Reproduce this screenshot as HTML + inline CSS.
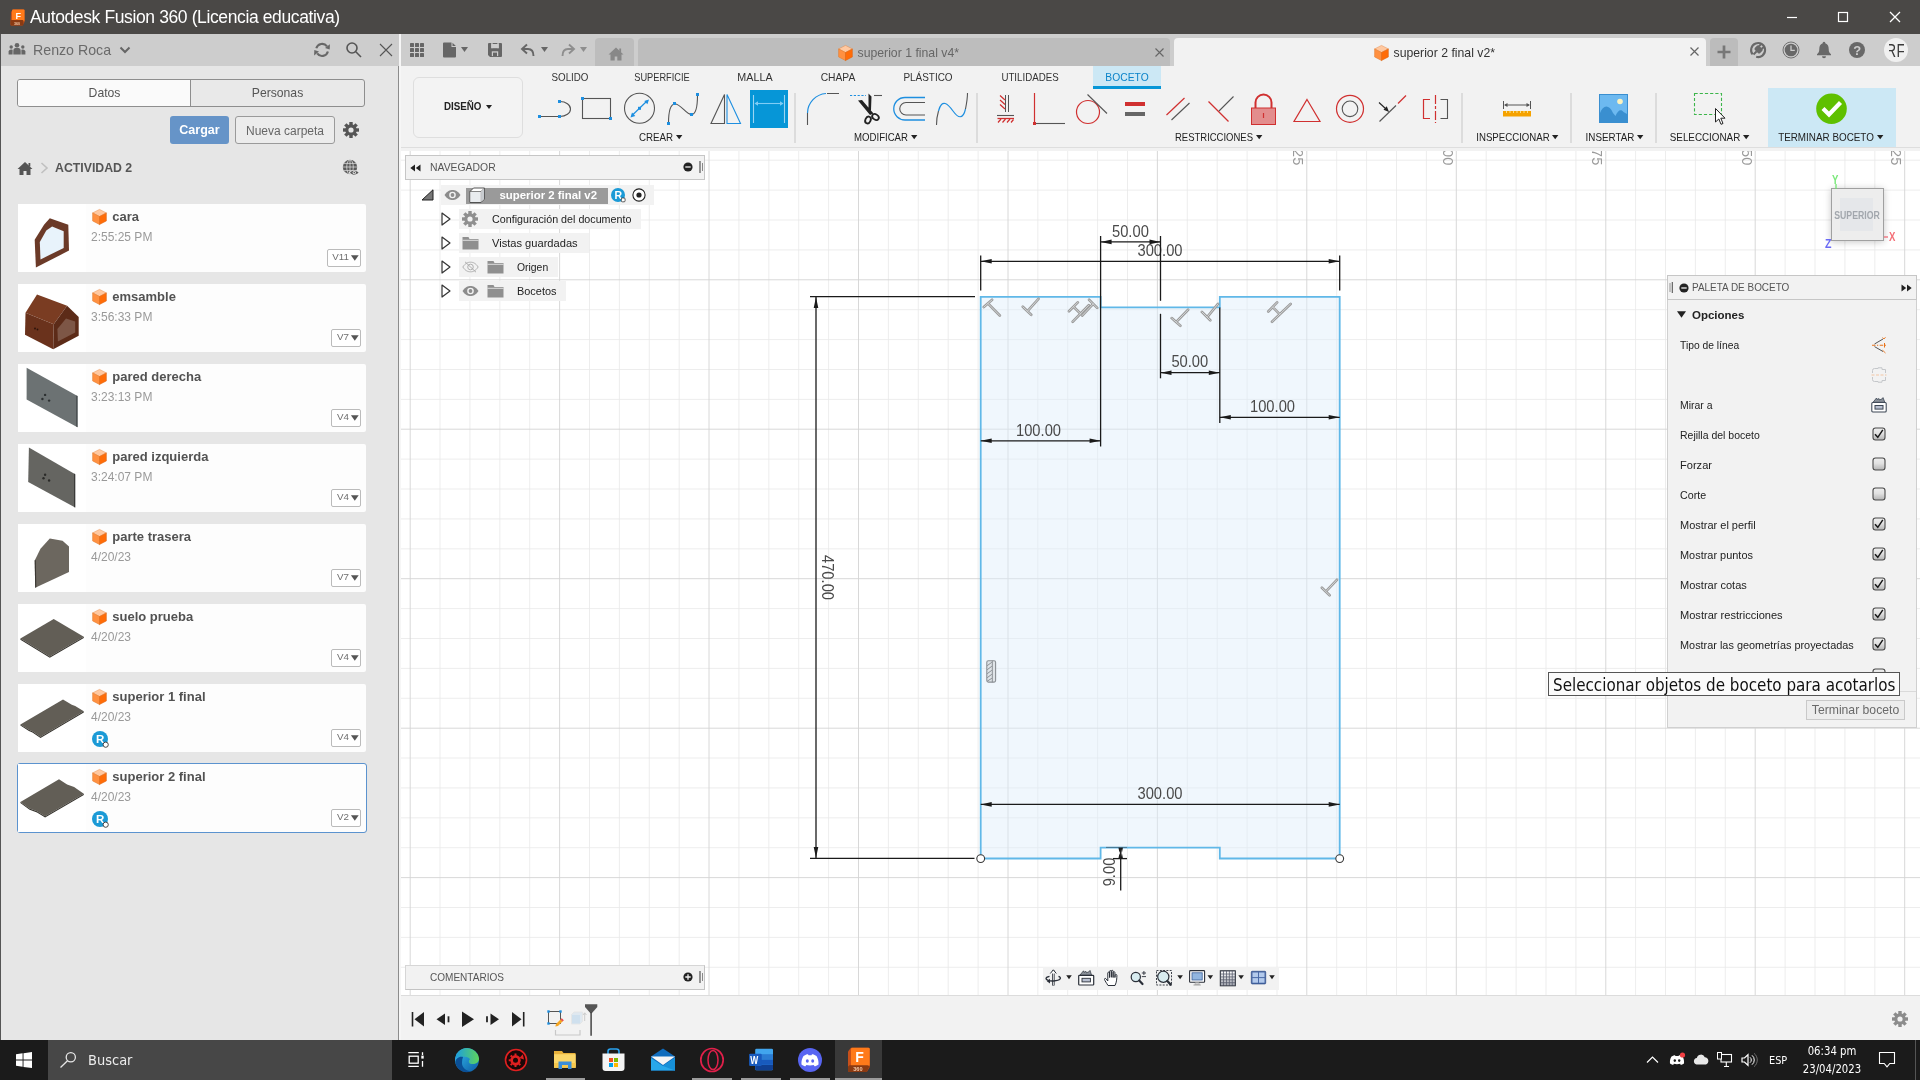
<!DOCTYPE html>
<html lang="es">
<head>
<meta charset="utf-8">
<title>Autodesk Fusion 360 (Licencia educativa)</title>
<style>
*{box-sizing:border-box;margin:0;padding:0}
html,body{width:1920px;height:1080px;overflow:hidden;background:#f2f2f2}
body{font-family:"Liberation Sans",sans-serif;font-size:12px;color:#333;position:relative}
.abs{position:absolute}
svg{position:absolute;overflow:visible}
.t{position:absolute;white-space:nowrap;line-height:1}
/* title bar */
#titlebar{position:absolute;left:0;top:0;width:1920px;height:34px;background:#4a4846}
#titlebar .ttl{left:30px;top:9px;font-size:17.5px;color:#fff;letter-spacing:-0.38px}
/* left panel */
#left{position:absolute;left:0;top:34px;width:399px;height:1006px;background:#e6e6e6;border-left:1px solid #555}
#lhead{position:absolute;left:0;top:0;width:398px;height:32px;background:#cdcdcd}
#ledge{position:absolute;left:397px;top:32px;width:1px;height:974px;background:#8c8c8c}
#gap{position:absolute;left:399px;top:34px;width:2px;height:1006px;background:#f6f6f6}
.card{position:absolute;left:18px;width:348px;height:68px;background:#fdfdfd;border-radius:2px}
.card .th{position:absolute;left:0;top:0;width:68px;height:68px;background:#fff}
.card .nm{left:94.3px;top:6px;font-size:13px;font-weight:bold;color:#525252}
.card .tm{left:73px;top:27px;font-size:12px;color:#999}
.card .vb{position:absolute;right:5px;top:45px;height:18px;border:1px solid #bbb;border-radius:2px;background:#fff;font-size:9.8px;color:#6e6e6e;padding:2.1px 11px 0 4.6px;line-height:1}
.card .vb:after{content:"";position:absolute;right:1.3px;top:5.3px;width:7.8px;height:5.4px;background:#555;clip-path:polygon(0 0,100% 0,50% 100%)}
.card.sel{outline:1px solid #5b93cf;border-radius:2px}
/* top bar */
#topbar{position:absolute;left:401px;top:34px;width:1519px;height:32px;background:#cdcdcd}
#toolbar{position:absolute;left:401px;top:66px;width:1519px;height:85px;background:#f2f2f2}
.tab{font-size:11.1px;color:#333;top:72.4px;transform:scaleX(.875)}
.glabel{font-size:11.1px;color:#222;top:132.4px;transform:scaleX(.885)}

.sep{position:absolute;top:93px;width:2px;height:50px;background:#dcdcdc}
/* canvas */
#canvas{position:absolute;left:401px;top:151px;width:1519px;height:844px;background:#fff;overflow:hidden}
#timeline{position:absolute;left:401px;top:995px;width:1519px;height:45px;background:#f2f2f2;border-top:1px solid #dcdcdc}
#taskbar{position:absolute;left:0;top:1040px;width:1920px;height:40px;background:#1b1b1b}
.dim{font-size:17px;fill:#4a4a4a;font-family:"Liberation Sans",sans-serif}
.prow{font-size:11px;color:#222}
</style>
</head>
<body>
<div id="root" style="position:absolute;left:0;top:0;width:1920px;height:1080px;will-change:transform">
<div id="titlebar">
  <svg style="left:10px;top:9px" width="15" height="17" viewBox="0 0 15 17">
    <path d="M1 3 L3 0.5 H13.5 A1 1 0 0 1 14.5 1.5 V13 L12.5 16.5 H1.5 A1 1 0 0 1 0.5 15.5 Z" fill="#c8501a"/>
    <rect x="2" y="0.5" width="12.5" height="12" rx="1" fill="#ff7a1a"/>
    <rect x="0.5" y="11" width="13" height="5.5" rx="1" fill="#8a3a12"/>
    <text x="5.5" y="9.5" font-size="9" font-weight="bold" fill="#fff" font-family="Liberation Sans,sans-serif">F</text>
    <text x="4" y="15.6" font-size="3.6" font-weight="bold" fill="#f5c9a8" font-family="Liberation Sans,sans-serif">360</text>
  </svg>
  <div class="t ttl">Autodesk Fusion 360 (Licencia educativa)</div>
  <svg style="left:1780px;top:0" width="140" height="34" viewBox="0 0 140 34">
    <path d="M7 17.5 H17" stroke="#fff" stroke-width="1.2" fill="none"/>
    <rect x="58.5" y="12.5" width="9" height="9" stroke="#fff" stroke-width="1.2" fill="none"/>
    <path d="M110 12 L120 22 M120 12 L110 22" stroke="#fff" stroke-width="1.3" fill="none"/>
  </svg>
</div>
<div id="left"><div id="lhead"></div><div id="ledge"></div>
</div><div id="gap"></div>
<svg style="left:8px;top:42px" width="18" height="14" viewBox="0 0 18 14" fill="#666">
<circle cx="9" cy="3.2" r="2.3"/><path d="M5.3 12.5 V9 A3.7 3.2 0 0 1 12.7 9 V12.5 Z"/>
<circle cx="3.2" cy="5" r="1.7"/><path d="M0.6 12.5 V9.6 A2.6 2.4 0 0 1 4.6 7.8 V12.5 Z"/>
<circle cx="14.8" cy="5" r="1.7"/><path d="M17.4 12.5 V9.6 A2.6 2.4 0 0 0 13.4 7.8 V12.5 Z"/></svg>
<div class="t" style="left:33px;top:43px;font-size:14.2px;color:#6a6a6a">Renzo Roca</div>
<svg style="left:119px;top:46px" width="12" height="8" viewBox="0 0 12 8"><path d="M1.5 1.5 L6 6 L10.5 1.5" stroke="#666" stroke-width="2" fill="none"/></svg>
<svg style="left:313px;top:41px" width="18" height="18" viewBox="0 0 18 18" fill="none" stroke="#686868" stroke-width="2.1">
<path d="M3.3 7.3 A6 6 0 0 1 14 5.4"/><path d="M14.9 10.5 A6 6 0 0 1 4.2 12.4"/><path d="M16.9 3.2 L16.7 8.6 L12 7.1 Z" fill="#686868" stroke="none"/><path d="M1.1 14.4 L1.3 9.1 L6 10.6 Z" fill="#686868" stroke="none"/></svg>
<svg style="left:345px;top:41px" width="18" height="18" viewBox="0 0 18 18" fill="none" stroke="#555" stroke-width="1.6"><circle cx="7" cy="7" r="5"/><path d="M10.8 10.8 L16 16"/></svg>
<svg style="left:379px;top:43px" width="14" height="14" viewBox="0 0 14 14" fill="none" stroke="#555" stroke-width="1.1"><path d="M1 1 L13 13 M13 1 L1 13"/></svg>
<div class="abs" style="left:17px;top:79px;width:348px;height:28px;border:1px solid #8e8e8e;border-radius:3px;background:#e9e9e9;overflow:hidden"><div class="abs" style="left:0;top:0;width:173px;height:26px;background:#fafafa;border-right:1px solid #8e8e8e"></div></div>
<div class="t" style="left:18px;top:87px;width:173px;text-align:center;font-size:12.2px;color:#555">Datos</div>
<div class="t" style="left:191px;top:87px;width:173px;text-align:center;font-size:12.2px;color:#555">Personas</div>
<div class="abs" style="left:170px;top:116px;width:59px;height:28px;background:#6694c8;border-radius:3px"></div><div class="t" style="left:170px;top:124px;width:59px;text-align:center;font-size:12.5px;font-weight:bold;color:#fff">Cargar</div>
<div class="abs" style="left:235px;top:116px;width:100px;height:28px;border:1px solid #9a9a9a;border-radius:3px;background:#ececec"></div><div class="t" style="left:235px;top:125px;width:100px;text-align:center;font-size:12px;color:#666">Nueva carpeta</div>
<svg style="left:343px;top:122px" width="16" height="16" viewBox="-8 -8 16 16" fill="#555"><rect x="-1.7" y="-8" width="3.4" height="4" transform="rotate(0)"/><rect x="-1.7" y="-8" width="3.4" height="4" transform="rotate(45)"/><rect x="-1.7" y="-8" width="3.4" height="4" transform="rotate(90)"/><rect x="-1.7" y="-8" width="3.4" height="4" transform="rotate(135)"/><rect x="-1.7" y="-8" width="3.4" height="4" transform="rotate(180)"/><rect x="-1.7" y="-8" width="3.4" height="4" transform="rotate(225)"/><rect x="-1.7" y="-8" width="3.4" height="4" transform="rotate(270)"/><rect x="-1.7" y="-8" width="3.4" height="4" transform="rotate(315)"/><path fill-rule="evenodd" d="M0 -5.8 A5.8 5.8 0 1 0 0 5.8 A5.8 5.8 0 1 0 0 -5.8 Z M0 -2.6 A2.6 2.6 0 1 1 0 2.6 A2.6 2.6 0 1 1 0 -2.6 Z"/></svg>
<svg style="left:17px;top:161px" width="16" height="15" viewBox="0 0 16 15"><path d="M8 1 L15.5 8 H13.5 V14 H9.5 V10 H6.5 V14 H2.5 V8 H0.5 Z" fill="#555"/><rect x="11.5" y="2" width="1.8" height="3.5" fill="#555"/></svg>
<svg style="left:40px;top:162px" width="9" height="12" viewBox="0 0 9 12"><path d="M1.5 1 L7 6 L1.5 11" stroke="#c0c0c0" stroke-width="1.6" fill="none"/></svg>
<div class="t" style="left:55px;top:162px;font-size:12.3px;font-weight:bold;color:#555">ACTIVIDAD 2</div>
<svg style="left:342px;top:159px" width="18" height="18" viewBox="0 0 18 18" fill="none"><circle cx="8" cy="8" r="7.2" fill="#5a5a5a"/><ellipse cx="8" cy="8" rx="3.3" ry="7.2" stroke="#e6e6e6" stroke-width="0.7"/><path d="M0.8 8 H15.2 M1.8 4.4 H14.2 M1.8 11.6 H14.2 M8 0.8 V15.2" stroke="#e6e6e6" stroke-width="0.7"/><path d="M6.8 13.6 C9 10 14 10 17.6 13.6 C14 17.4 9 17.4 6.8 13.6 Z" fill="#e6e6e6"/><path d="M8 13.6 C9.8 11 14 11 16.6 13.6 C14 16.4 9.8 16.4 8 13.6 Z" fill="#5a5a5a"/><circle cx="12.3" cy="13.6" r="1.7" fill="#e6e6e6"/><circle cx="12.3" cy="13.6" r="0.8" fill="#5a5a5a"/></svg>
<div class="card" style="top:204px"><div class="th"><svg style="left:0;top:0" width="68" height="68" viewBox="0 0 68 68"><path d="M31.8 14.2 L50.3 20.7 L51 46.6 L17.9 63.5 L16.7 35.8 L26 20.7 Z" fill="#6b3a28"/><path d="M34.1 22.6 L45.7 27.2 L45.7 43.9 L22.5 55.4 L21.8 38.1 L28.3 26.5 Z" fill="#e8f3fb"/></svg></div><svg style="left:74px;top:5px" width="15" height="16.0" viewBox="0 0 15 16"><path d="M7.5 0.4 L14.4 3.9 L7.5 7.5 L0.6 3.9 Z" fill="#ffc8a0" stroke="#e88a48" stroke-width="0.5"/><path d="M0.6 3.9 L7.5 7.5 V15.6 L0.6 11.9 Z" fill="#ff9040" stroke="#e07828" stroke-width="0.5"/><path d="M14.4 3.9 L7.5 7.5 V15.6 L14.4 11.9 Z" fill="#ff6c08" stroke="#d86414" stroke-width="0.5"/></svg><div class="t nm">cara</div><div class="t tm">2:55:25 PM</div><div class="vb">V11</div></div>
<div class="card" style="top:284px"><div class="th"><svg style="left:0;top:0" width="68" height="68" viewBox="0 0 68 68"><path d="M19 10.6 L49.1 21.7 L35.7 40.3 L7.5 28.7 Z" fill="#7a3c22"/><path d="M7.5 28.7 L35.7 40.3 L35.2 65.3 L7 50.7 Z" fill="#6a321c"/><path d="M49.1 21.7 L60.7 32.9 L60.7 51.8 L35.2 65.3 L35.7 40.3 Z" fill="#5c2b18"/><path d="M48 34.5 L57.2 37.5 L57.2 48.4 L39.9 57.6 L39.4 44.9 Z" fill="#7d5646"/><circle cx="17" cy="44.5" r="0.9" fill="#2a120a"/><circle cx="19.5" cy="45.5" r="0.9" fill="#2a120a"/></svg></div><svg style="left:74px;top:5px" width="15" height="16.0" viewBox="0 0 15 16"><path d="M7.5 0.4 L14.4 3.9 L7.5 7.5 L0.6 3.9 Z" fill="#ffc8a0" stroke="#e88a48" stroke-width="0.5"/><path d="M0.6 3.9 L7.5 7.5 V15.6 L0.6 11.9 Z" fill="#ff9040" stroke="#e07828" stroke-width="0.5"/><path d="M14.4 3.9 L7.5 7.5 V15.6 L14.4 11.9 Z" fill="#ff6c08" stroke="#d86414" stroke-width="0.5"/></svg><div class="t nm">emsamble</div><div class="t tm">3:56:33 PM</div><div class="vb">V7</div></div>
<div class="card" style="top:364px"><div class="th"><svg style="left:0;top:0" width="68" height="68" viewBox="0 0 68 68"><path d="M8.6 3.8 L59.5 32 L59.5 63.3 L8.6 35.5 Z" fill="#6c7273"/><path d="M58.3 31.4 L59.5 32 L59.5 63.3 L58.3 62.6 Z" fill="#3f4446"/><circle cx="27.1" cy="30.9" r="1.2" fill="#2c3031"/><circle cx="24.4" cy="35" r="1.2" fill="#2c3031"/><circle cx="31.1" cy="36.6" r="1.2" fill="#2c3031"/></svg></div><svg style="left:74px;top:5px" width="15" height="16.0" viewBox="0 0 15 16"><path d="M7.5 0.4 L14.4 3.9 L7.5 7.5 L0.6 3.9 Z" fill="#ffc8a0" stroke="#e88a48" stroke-width="0.5"/><path d="M0.6 3.9 L7.5 7.5 V15.6 L0.6 11.9 Z" fill="#ff9040" stroke="#e07828" stroke-width="0.5"/><path d="M14.4 3.9 L7.5 7.5 V15.6 L14.4 11.9 Z" fill="#ff6c08" stroke="#d86414" stroke-width="0.5"/></svg><div class="t nm">pared derecha</div><div class="t tm">3:23:13 PM</div><div class="vb">V4</div></div>
<div class="card" style="top:444px"><div class="th"><svg style="left:0;top:0" width="68" height="68" viewBox="0 0 68 68"><path d="M10.9 3.4 L57.2 30.3 L57.2 63.6 L10.2 38.1 Z" fill="#656561"/><path d="M56 29.6 L57.2 30.3 L57.2 63.6 L56 63 Z" fill="#3a3a38"/><circle cx="27.1" cy="30.7" r="1.2" fill="#2a2a28"/><circle cx="25.5" cy="34.2" r="1.2" fill="#2a2a28"/><circle cx="31.1" cy="36.5" r="1.2" fill="#2a2a28"/></svg></div><svg style="left:74px;top:5px" width="15" height="16.0" viewBox="0 0 15 16"><path d="M7.5 0.4 L14.4 3.9 L7.5 7.5 L0.6 3.9 Z" fill="#ffc8a0" stroke="#e88a48" stroke-width="0.5"/><path d="M0.6 3.9 L7.5 7.5 V15.6 L0.6 11.9 Z" fill="#ff9040" stroke="#e07828" stroke-width="0.5"/><path d="M14.4 3.9 L7.5 7.5 V15.6 L14.4 11.9 Z" fill="#ff6c08" stroke="#d86414" stroke-width="0.5"/></svg><div class="t nm">pared izquierda</div><div class="t tm">3:24:07 PM</div><div class="vb">V4</div></div>
<div class="card" style="top:524px"><div class="th"><svg style="left:0;top:0" width="68" height="68" viewBox="0 0 68 68"><path d="M31.8 14.4 L44.5 16.7 L51 22.5 L51 47.9 L17.2 63.7 L16.7 36.4 L22.5 24.8 Z" fill="#6c675f"/><path d="M16.7 36.4 L17.8 36 L18.3 63.2 L17.2 63.7 Z" fill="#3a3732"/></svg></div><svg style="left:74px;top:5px" width="15" height="16.0" viewBox="0 0 15 16"><path d="M7.5 0.4 L14.4 3.9 L7.5 7.5 L0.6 3.9 Z" fill="#ffc8a0" stroke="#e88a48" stroke-width="0.5"/><path d="M0.6 3.9 L7.5 7.5 V15.6 L0.6 11.9 Z" fill="#ff9040" stroke="#e07828" stroke-width="0.5"/><path d="M14.4 3.9 L7.5 7.5 V15.6 L14.4 11.9 Z" fill="#ff6c08" stroke="#d86414" stroke-width="0.5"/></svg><div class="t nm">parte trasera</div><div class="t tm">4/20/23</div><div class="vb">V7</div></div>
<div class="card" style="top:604px"><div class="th"><svg style="left:0;top:0" width="68" height="68" viewBox="0 0 68 68"><path d="M35.7 14.9 L65.8 32.8 L31.8 52.4 L2.4 34.6 Z" fill="#625e56"/><path d="M2.4 34.6 L31.8 52.4 L65.8 32.8 L65.8 34 L31.8 53.8 L2.4 35.8 Z" fill="#38352f"/></svg></div><svg style="left:74px;top:5px" width="15" height="16.0" viewBox="0 0 15 16"><path d="M7.5 0.4 L14.4 3.9 L7.5 7.5 L0.6 3.9 Z" fill="#ffc8a0" stroke="#e88a48" stroke-width="0.5"/><path d="M0.6 3.9 L7.5 7.5 V15.6 L0.6 11.9 Z" fill="#ff9040" stroke="#e07828" stroke-width="0.5"/><path d="M14.4 3.9 L7.5 7.5 V15.6 L14.4 11.9 Z" fill="#ff6c08" stroke="#d86414" stroke-width="0.5"/></svg><div class="t nm">suelo prueba</div><div class="t tm">4/20/23</div><div class="vb">V4</div></div>
<div class="card" style="top:684px"><div class="th"><svg style="left:0;top:0" width="68" height="68" viewBox="0 0 68 68"><path d="M45 15.4 L53.8 20.7 L57.2 21.9 L65.8 27.2 L22.5 52.7 L14.4 47.3 L10.9 45.7 L2.4 40.4 Z" fill="#625e56"/><path d="M2.4 40.4 L10.9 45.7 L14.4 47.3 L22.5 52.7 L65.8 27.2 L65.8 28.4 L22.5 54 L14.4 48.6 L10.9 47 L2.4 41.6 Z" fill="#38352f"/></svg></div><svg style="left:74px;top:5px" width="15" height="16.0" viewBox="0 0 15 16"><path d="M7.5 0.4 L14.4 3.9 L7.5 7.5 L0.6 3.9 Z" fill="#ffc8a0" stroke="#e88a48" stroke-width="0.5"/><path d="M0.6 3.9 L7.5 7.5 V15.6 L0.6 11.9 Z" fill="#ff9040" stroke="#e07828" stroke-width="0.5"/><path d="M14.4 3.9 L7.5 7.5 V15.6 L14.4 11.9 Z" fill="#ff6c08" stroke="#d86414" stroke-width="0.5"/></svg><div class="t nm">superior 1 final</div><div class="t tm">4/20/23</div><svg style="left:74px;top:46.6px" width="18" height="18" viewBox="0 0 18 18"><circle cx="8" cy="8" r="8" fill="#1b9ad6"/><text x="4" y="12.3" font-size="11.5" font-weight="bold" fill="#fff" font-family="Liberation Sans,sans-serif">R</text><circle cx="13.7" cy="13.7" r="2.6" fill="#fff" stroke="#333" stroke-width="0.9"/></svg><div class="vb">V4</div></div>
<div class="card sel" style="top:764px"><div class="th"><svg style="left:0;top:0" width="68" height="68" viewBox="0 0 68 68"><path d="M41 15.3 L49.1 20.6 L56.1 22.9 L65.8 29.8 L27.1 52.3 L19 47.2 L11.6 44.4 L2.4 37.9 Z" fill="#625e56"/><path d="M2.4 37.9 L11.6 44.4 L19 47.2 L27.1 52.3 L65.8 29.8 L65.8 31 L27.1 53.6 L19 48.5 L11.6 45.7 L2.4 39.1 Z" fill="#38352f"/></svg></div><svg style="left:74px;top:5px" width="15" height="16.0" viewBox="0 0 15 16"><path d="M7.5 0.4 L14.4 3.9 L7.5 7.5 L0.6 3.9 Z" fill="#ffc8a0" stroke="#e88a48" stroke-width="0.5"/><path d="M0.6 3.9 L7.5 7.5 V15.6 L0.6 11.9 Z" fill="#ff9040" stroke="#e07828" stroke-width="0.5"/><path d="M14.4 3.9 L7.5 7.5 V15.6 L14.4 11.9 Z" fill="#ff6c08" stroke="#d86414" stroke-width="0.5"/></svg><div class="t nm">superior 2 final</div><div class="t tm">4/20/23</div><svg style="left:74px;top:46.6px" width="18" height="18" viewBox="0 0 18 18"><circle cx="8" cy="8" r="8" fill="#1b9ad6"/><text x="4" y="12.3" font-size="11.5" font-weight="bold" fill="#fff" font-family="Liberation Sans,sans-serif">R</text><circle cx="13.7" cy="13.7" r="2.6" fill="#fff" stroke="#333" stroke-width="0.9"/></svg><div class="vb">V2</div></div><div id="topbar"></div><div id="toolbar"></div>
<svg style="left:410px;top:43px" width="14" height="14" viewBox="0 0 14 14" fill="#666"><rect x="0" y="0" width="4" height="4" rx="0.6"/><rect x="5" y="0" width="4" height="4" rx="0.6"/><rect x="10" y="0" width="4" height="4" rx="0.6"/><rect x="0" y="5" width="4" height="4" rx="0.6"/><rect x="5" y="5" width="4" height="4" rx="0.6"/><rect x="10" y="5" width="4" height="4" rx="0.6"/><rect x="0" y="10" width="4" height="4" rx="0.6"/><rect x="5" y="10" width="4" height="4" rx="0.6"/><rect x="10" y="10" width="4" height="4" rx="0.6"/></svg>
<svg style="left:443px;top:42px" width="14" height="16" viewBox="0 0 14 16"><path d="M1 0.5 H8.5 V5 H13 V14.5 A1 1 0 0 1 12 15.5 H1 A1 1 0 0 1 0 14.5 V1.5 A1 1 0 0 1 1 0.5 Z" fill="#666"/><path d="M9.5 0.8 L12.8 4 H9.5 Z" fill="#666"/></svg>
<svg style="left:461px;top:47px" width="7" height="5" viewBox="0 0 7 5"><path d="M0 0 H7 L3.5 5 Z" fill="#666"/></svg>
<svg style="left:488px;top:43px" width="14" height="14" viewBox="0 0 14 14"><path d="M1 0 H13 A1 1 0 0 1 14 1 V13 A1 1 0 0 1 13 14 H2 L0 12 V1 A1 1 0 0 1 1 0 Z" fill="#666"/><rect x="3.3" y="1" width="7.4" height="4.2" fill="#cdcdcd"/><rect x="3.8" y="8.3" width="6.4" height="4.8" fill="#cdcdcd"/><rect x="5" y="9.6" width="4" height="3.6" fill="#666"/><rect x="3.3" y="0" width="1.3" height="5.2" fill="#cdcdcd"/><rect x="9.4" y="0" width="1.3" height="5.2" fill="#cdcdcd"/></svg>
<svg style="left:520px;top:43px" width="16" height="14" viewBox="0 0 16 14" fill="none" stroke="#666" stroke-width="1.9"><path d="M7 1.5 L2 6 L7 10.5"/><path d="M2.5 6 H8 C12 6 13.5 9 13.5 13"/></svg>
<svg style="left:541px;top:47px" width="7" height="5" viewBox="0 0 7 5"><path d="M0 0 H7 L3.5 5 Z" fill="#666"/></svg>
<svg style="left:560px;top:43px" width="16" height="14" viewBox="0 0 16 14" fill="none" stroke="#8e8e8e" stroke-width="1.9"><path d="M9 1.5 L14 6 L9 10.5"/><path d="M13.5 6 H8 C4 6 2.5 9 2.5 13"/></svg>
<svg style="left:580px;top:47px" width="7" height="5" viewBox="0 0 7 5"><path d="M0 0 H7 L3.5 5 Z" fill="#8e8e8e"/></svg>
<div class="abs" style="left:595px;top:38px;width:39px;height:28px;background:#bdbdbd;border-radius:4px 4px 0 0"></div>
<svg style="left:608px;top:47px" width="16" height="14" viewBox="0 0 16 14"><path d="M8 0.5 L15.5 7.5 H13.5 V13.5 H9.3 V9.5 H6.7 V13.5 H2.5 V7.5 H0.5 Z" fill="#888"/><rect x="11.3" y="1.5" width="1.8" height="3.5" fill="#888"/></svg>
<div class="abs" style="left:638px;top:38px;width:532px;height:28px;background:#bdbdbd;border-radius:4px 4px 0 0"></div>
<svg style="left:838px;top:45px" width="15" height="16.0" viewBox="0 0 15 16"><path d="M7.5 0.4 L14.4 3.9 L7.5 7.5 L0.6 3.9 Z" fill="#ffc8a0" stroke="#e88a48" stroke-width="0.5"/><path d="M0.6 3.9 L7.5 7.5 V15.6 L0.6 11.9 Z" fill="#ff9040" stroke="#e07828" stroke-width="0.5"/><path d="M14.4 3.9 L7.5 7.5 V15.6 L14.4 11.9 Z" fill="#ff6c08" stroke="#d86414" stroke-width="0.5"/></svg>
<div class="t" style="left:857.5px;top:47px;font-size:12.25px;color:#666">superior 1 final v4*</div>
<svg style="left:1154.5px;top:47.5px" width="9" height="9" viewBox="0 0 9 9"><path d="M0.5 0.5 L8.5 8.5 M8.5 0.5 L0.5 8.5" stroke="#666" stroke-width="1.1"/></svg>
<div class="abs" style="left:1174px;top:38px;width:532px;height:28px;background:#f2f2f2;border-radius:4px 4px 0 0"></div>
<svg style="left:1374px;top:45px" width="15" height="16.0" viewBox="0 0 15 16"><path d="M7.5 0.4 L14.4 3.9 L7.5 7.5 L0.6 3.9 Z" fill="#ffc8a0" stroke="#e88a48" stroke-width="0.5"/><path d="M0.6 3.9 L7.5 7.5 V15.6 L0.6 11.9 Z" fill="#ff9040" stroke="#e07828" stroke-width="0.5"/><path d="M14.4 3.9 L7.5 7.5 V15.6 L14.4 11.9 Z" fill="#ff6c08" stroke="#d86414" stroke-width="0.5"/></svg>
<div class="t" style="left:1393.5px;top:47px;font-size:12.25px;color:#333">superior 2 final v2*</div>
<svg style="left:1690px;top:47px" width="9" height="9" viewBox="0 0 9 9"><path d="M0.5 0.5 L8.5 8.5 M8.5 0.5 L0.5 8.5" stroke="#666" stroke-width="1.2"/></svg>
<div class="abs" style="left:1710px;top:38px;width:28px;height:28px;background:#bcbcbc;border-radius:4px 4px 0 0"></div>
<svg style="left:1717px;top:45px" width="14" height="14" viewBox="0 0 14 14"><path d="M7 0.5 V13.5 M0.5 7 H13.5" stroke="#777" stroke-width="2.7"/></svg>
<svg style="left:1749px;top:41px" width="18" height="18" viewBox="0 0 18 18"><path d="M3.6 13.4 A7 7 0 1 1 7.2 15.8" fill="none" stroke="#686868" stroke-width="2.1"/><g transform="rotate(45 9 9)" fill="#686868"><rect x="5.3" y="5.2" width="7.4" height="6" rx="1.6"/><rect x="6.1" y="1.8" width="2" height="4"/><rect x="9.9" y="1.8" width="2" height="4"/><rect x="8" y="10.8" width="2" height="4.6"/></g></svg>
<svg style="left:1782px;top:41px" width="18" height="18" viewBox="0 0 18 18"><circle cx="9" cy="9" r="8" fill="none" stroke="#686868" stroke-width="0.9"/><circle cx="9" cy="9" r="6.3" fill="#686868"/><path d="M9 4.5 V9.3 H12.8" stroke="#cdcdcd" stroke-width="1.3" fill="none"/></svg>
<svg style="left:1816px;top:41px" width="16" height="18" viewBox="0 0 16 18"><path d="M8 0.8 A1.3 1.3 0 0 1 9.3 2.3 C12 3.2 12.7 5.5 12.7 8 C12.7 11 13.5 12 15 13.3 V14.3 H1 V13.3 C2.5 12 3.3 11 3.3 8 C3.3 5.5 4 3.2 6.7 2.3 A1.3 1.3 0 0 1 8 0.8 Z" fill="#686868"/><path d="M6 15.3 H10 A2 2 0 0 1 6 15.3 Z" fill="#686868"/></svg>
<svg style="left:1848px;top:41px" width="18" height="18" viewBox="0 0 18 18"><circle cx="9" cy="9" r="8" fill="#686868"/><text x="5.2" y="13.6" font-size="13" font-weight="bold" fill="#cdcdcd" font-family="Liberation Sans,sans-serif">?</text></svg>
<div class="abs" style="left:1883.7px;top:37.6px;width:24.6px;height:24.6px;border-radius:50%;background:#f0f0f0"></div>
<div class="abs" style="left:1889px;top:38px;width:15.2px;height:24px;overflow:hidden"><div class="t" style="left:-2.7px;top:4.9px;font-size:17.5px;color:#3a3a3a;letter-spacing:0.6px;transform:scaleX(.8);transform-origin:0 0">RF</div></div><div class="abs" style="left:1768px;top:88px;width:128px;height:59px;background:#cce8f5"></div>
<div class="abs" style="left:413px;top:76.5px;width:110px;height:61px;border:1.5px solid #dedede;border-radius:6px;background:#f3f3f3"></div>
<div class="t" style="left:443.5px;top:101.3px;font-size:11.3px;font-weight:bold;color:#222;transform:scaleX(.865);transform-origin:0 0">DISEÑO</div>
<svg style="left:486px;top:105px" width="6" height="4" viewBox="0 0 6 4"><path d="M0 0 H6 L3.0 4 Z" fill="#222"/></svg>
<div class="t tab" style="left:519.5px;width:100px;text-align:center;transform:scaleX(0.882)">SOLIDO</div>
<div class="t tab" style="left:612px;width:100px;text-align:center;transform:scaleX(0.833)">SUPERFICIE</div>
<div class="t tab" style="left:705px;width:100px;text-align:center;transform:scaleX(0.97)">MALLA</div>
<div class="t tab" style="left:787.5px;width:100px;text-align:center;transform:scaleX(0.927)">CHAPA</div>
<div class="t tab" style="left:877.5px;width:100px;text-align:center;transform:scaleX(0.896)">PLÁSTICO</div>
<div class="t tab" style="left:980px;width:100px;text-align:center;transform:scaleX(0.876)">UTILIDADES</div>
<div class="abs" style="left:1092.5px;top:66px;width:68px;height:23.3px;background:#cce8f5;border-bottom:3px solid #0696d7"></div>
<div class="t tab" style="left:1076.5px;width:100px;text-align:center;color:#0a83c9;transform:scaleX(0.928)">BOCETO</div>
<div class="t glabel" style="left:555.5px;width:200px;text-align:center;transform:scaleX(0.88)">CREAR</div>
<svg style="left:675.6px;top:135.3px" width="6.4" height="4.2" viewBox="0 0 6.4 4.2"><path d="M0 0 H6.4 L3.2 4.2 Z" fill="#222"/></svg>
<div class="t glabel" style="left:781.0px;width:200px;text-align:center;transform:scaleX(0.867)">MODIFICAR</div>
<svg style="left:911.0px;top:135.3px" width="6.4" height="4.2" viewBox="0 0 6.4 4.2"><path d="M0 0 H6.4 L3.2 4.2 Z" fill="#222"/></svg>
<div class="t glabel" style="left:1114.0px;width:200px;text-align:center;transform:scaleX(0.855)">RESTRICCIONES</div>
<svg style="left:1256.0px;top:135.3px" width="6.4" height="4.2" viewBox="0 0 6.4 4.2"><path d="M0 0 H6.4 L3.2 4.2 Z" fill="#222"/></svg>
<div class="t glabel" style="left:1412.5px;width:200px;text-align:center;transform:scaleX(0.87)">INSPECCIONAR</div>
<svg style="left:1552.2px;top:135.3px" width="6.4" height="4.2" viewBox="0 0 6.4 4.2"><path d="M0 0 H6.4 L3.2 4.2 Z" fill="#222"/></svg>
<div class="t glabel" style="left:1510.0px;width:200px;text-align:center;transform:scaleX(0.885)">INSERTAR</div>
<svg style="left:1637.4px;top:135.3px" width="6.4" height="4.2" viewBox="0 0 6.4 4.2"><path d="M0 0 H6.4 L3.2 4.2 Z" fill="#222"/></svg>
<div class="t glabel" style="left:1604.5px;width:200px;text-align:center;transform:scaleX(0.886)">SELECCIONAR</div>
<svg style="left:1742.8px;top:135.3px" width="6.4" height="4.2" viewBox="0 0 6.4 4.2"><path d="M0 0 H6.4 L3.2 4.2 Z" fill="#222"/></svg>
<div class="t glabel" style="left:1726.0px;width:200px;text-align:center;transform:scaleX(0.889)">TERMINAR BOCETO</div>
<svg style="left:1876.9px;top:135.3px" width="6.4" height="4.2" viewBox="0 0 6.4 4.2"><path d="M0 0 H6.4 L3.2 4.2 Z" fill="#222"/></svg>
<div class="sep" style="left:794px"></div>
<div class="sep" style="left:976px"></div>
<div class="sep" style="left:1461px"></div>
<div class="sep" style="left:1570px"></div>
<div class="sep" style="left:1654.5px"></div>
<div class="abs" style="left:401px;top:147px;width:1519px;height:1px;background:#dedede"></div><svg style="left:401px;top:66px" width="1519" height="82" viewBox="401 66 1519 82" fill="none" stroke-linecap="butt">
<path d="M539 116.5 H559 M560 101.5 A10.5 7.5 0 0 1 560 116.5" stroke="#555" stroke-width="1.1"/><rect x="538.0" y="115.0" width="3" height="3" fill="#1e8fe0" stroke="none"/><rect x="558.0" y="115.0" width="3" height="3" fill="#1e8fe0" stroke="none"/><rect x="558.0" y="100.0" width="3" height="3" fill="#1e8fe0" stroke="none"/>
<rect x="582.5" y="98.5" width="28" height="20" stroke="#555" stroke-width="1.1"/><rect x="581.0" y="97.0" width="3" height="3" fill="#1e8fe0" stroke="none"/><rect x="609.0" y="117.0" width="3" height="3" fill="#1e8fe0" stroke="none"/>
<circle cx="639.5" cy="108.3" r="15" stroke="#555" stroke-width="1.1"/><path d="M632 115.5 L647 101" stroke="#1e8fe0" stroke-width="1.2"/><path d="M630.5 117.5 L632 112.5 L635.3 116 Z M649 99.5 L647.4 104.3 L644.2 101 Z" fill="#1e8fe0" stroke="none"/><rect x="638.0" y="106.8" width="3" height="3" fill="#1e8fe0" stroke="none"/>
<path d="M668.5 123.5 C668.5 110 671 104 675 104 C681 104 686 114.5 691.5 114.5 C696 114.5 697.5 106 697.5 95" stroke="#555" stroke-width="1.1"/><rect x="667.0" y="122.0" width="3" height="3" fill="#1e8fe0" stroke="none"/><rect x="673.0" y="102.0" width="3" height="3" fill="#1e8fe0" stroke="none"/><rect x="690.0" y="113.0" width="3" height="3" fill="#1e8fe0" stroke="none"/><rect x="696.0" y="93.0" width="3" height="3" fill="#1e8fe0" stroke="none"/>
<path d="M724.5 94.5 V123.5 H711 Z" stroke="#555" stroke-width="1.1"/><path d="M727 94.5 V123.5 H740.5 Z" stroke="#1e8fe0" stroke-width="1.1"/>
<rect x="750" y="90" width="38" height="38" fill="#0696d7" stroke="none"/><path d="M753.5 95 V123 M784.5 95 V123" stroke="#9ad5f2" stroke-width="1.1"/><path d="M755 103.5 H783" stroke="#7fcdf5" stroke-width="1.1"/><path d="M754.5 103.5 L758 101.3 V105.7 Z M783.5 103.5 L780 101.3 V105.7 Z" fill="#7fcdf5" stroke="none"/>
<path d="M807.5 113 A20 20 0 0 1 826 93.5" stroke="#1e8fe0" stroke-width="1.2"/><path d="M807.5 113 V125 M827 93.5 H839" stroke="#555" stroke-width="1.1"/>
<path d="M850 95.5 H866" stroke="#1e8fe0" stroke-width="1.1" stroke-dasharray="2.2 1.6"/><path d="M874 95.5 H882" stroke="#555" stroke-width="1.1"/>
<path d="M868.5 93.5 L871.5 96.5 L871 110 L868.5 112 Z M858 100.5 L862 100 L873.5 113.5 L870 115 Z" fill="#222" stroke="none"/><ellipse cx="868" cy="120" rx="2.6" ry="3.6" transform="rotate(25 868 120)" stroke="#222" stroke-width="1.8"/><ellipse cx="875.5" cy="117" rx="2.6" ry="3.6" transform="rotate(-55 875.5 117)" stroke="#222" stroke-width="1.8"/>
<path d="M925 97.5 H905 A11 11 0 0 0 905 120 H925" stroke="#1e8fe0" stroke-width="1.3"/><path d="M925 102.5 H906 A6 6 0 0 0 906 115 H925" stroke="#555" stroke-width="1.1"/>
<path d="M936.5 125 C936.5 120 937 116 938.5 111" stroke="#555" stroke-width="1.1"/><path d="M938.5 111 C942 98 948 104 953 111 C958 118 963 120 965.5 109" stroke="#1e8fe0" stroke-width="1.2"/><path d="M965.5 109 C966.5 104 967.5 98 967.5 93" stroke="#555" stroke-width="1.1"/>
<path d="M1005.5 95 V112 M1008.5 95 V112" stroke="#555" stroke-width="1"/><path d="M1000 95.5 L1005 100 M1000 100 L1005 104.5 M1000 104.5 L1005 109" stroke="#d03030" stroke-width="1.2"/><path d="M997 115.5 H1014" stroke="#555" stroke-width="1.1"/><path d="M997.5 118.5 H1014" stroke="#d03030" stroke-width="1.3"/><path d="M998 122.5 L1001 119 M1002.5 122.5 L1005.5 119 M1007 122.5 L1010 119 M1011 122.5 L1013.5 119.5" stroke="#d03030" stroke-width="1.2"/>
<path d="M1034.5 93 V122" stroke="#d03030" stroke-width="1.2"/><path d="M1036 123.5 H1065" stroke="#555" stroke-width="1.1"/><rect x="1033.0" y="122.0" width="3" height="3" fill="#d03030" stroke="none"/>
<circle cx="1088" cy="112" r="11.5" stroke="#d03030" stroke-width="1.2"/><path d="M1087.5 94.5 L1107 113.5" stroke="#555" stroke-width="1.1"/>
<rect x="1125" y="102" width="20" height="4" fill="#d03030" stroke="none"/><rect x="1125" y="112" width="20" height="4" fill="#666" stroke="none"/>
<path d="M1166.5 115 L1184.5 98" stroke="#d03030" stroke-width="1.2"/><path d="M1171.5 120 L1189.5 103" stroke="#555" stroke-width="1.1"/>
<path d="M1208.5 101.5 L1228.5 121.5" stroke="#d03030" stroke-width="1.2"/><path d="M1219 111 L1233.5 96.5" stroke="#555" stroke-width="1.1"/>
<path d="M1255.5 108 V102.5 A8 8 0 0 1 1271.5 102.5 V108" stroke="#d03030" stroke-width="2"/><rect x="1251.5" y="108" width="24" height="16.5" fill="#e38d8d" stroke="#d03030" stroke-width="1"/><path d="M1263.5 113 V118" stroke="#d03030" stroke-width="1.2"/>
<path d="M1307 99.5 L1320 121.5 H1294 Z" stroke="#d03030" stroke-width="1.2"/>
<circle cx="1350" cy="108.8" r="13.5" stroke="#d03030" stroke-width="1.2"/><circle cx="1350" cy="108.8" r="7.8" stroke="#555" stroke-width="1.1"/>
<path d="M1379.5 121.5 L1396 105.5" stroke="#555" stroke-width="1.1"/><path d="M1398 103.5 L1406 95.5" stroke="#d03030" stroke-width="1.2"/><path d="M1379 102.5 L1386 109" stroke="#222" stroke-width="1.1"/><path d="M1389 112 L1383.5 109.8 L1386.8 106.3 Z" fill="#222" stroke="none"/>
<path d="M1430 99.5 H1423.5 V118.5 H1430" stroke="#d03030" stroke-width="1.2"/><path d="M1440.5 99.5 H1447.5 V118.5 H1440.5" stroke="#555" stroke-width="1.1"/><path d="M1435.5 95 V123" stroke="#d03030" stroke-width="1.2" stroke-dasharray="9 2 3 2"/>
<path d="M1503.5 101 V109 M1530.5 101 V109 M1505 105 H1529" stroke="#555" stroke-width="1"/><path d="M1504 105 L1507.5 103 V107 Z M1530 105 L1526.5 103 V107 Z" fill="#555" stroke="none"/><rect x="1503" y="111" width="28" height="5.5" fill="#f5a200" stroke="none"/><path d="M1506.5 111 V113 M1510 111 V113 M1513.5 111 V113 M1517 111 V113 M1520.5 111 V113 M1524 111 V113 M1527.5 111 V113" stroke="#fbe08a" stroke-width="1"/>
<rect x="1599.5" y="94.5" width="28" height="28" fill="#6db9f0" stroke="#3a8fd0" stroke-width="1"/><path d="M1600 113 C1603 105 1609 104 1613 113 L1615.5 116 C1618 110 1621 109 1623.5 112 L1627 114 V122 H1600 Z" fill="#3a8fd0" stroke="none"/><circle cx="1620" cy="101.5" r="2.8" fill="#fdf3c0" stroke="none"/>
<rect x="1694.5" y="93.5" width="27" height="21" stroke="#3cb54a" stroke-width="1.1" stroke-dasharray="3.2 2"/><path d="M1715.5 108.5 V122 L1718.8 119 L1721 124.3 L1723 123.5 L1720.8 118.2 H1725 Z" fill="#fff" stroke="#222" stroke-width="1"/>
<circle cx="1831.5" cy="108.8" r="15.3" fill="#5fc000" stroke="none"/><path d="M1823 108.5 L1829 114.5 L1840.5 102.5" stroke="#fff" stroke-width="4.2"/>
</svg><div id="canvas"></div>
<svg style="left:401px;top:151px;overflow:hidden" width="1519" height="844" viewBox="401 151 1519 844" fill="none">
<path d="M440.0 150 V995 M469.9 150 V995 M499.8 150 V995 M529.7 150 V995 M589.5 150 V995 M619.4 150 V995 M649.3 150 V995 M679.2 150 V995 M738.9 150 V995 M768.8 150 V995 M798.7 150 V995 M828.6 150 V995 M888.4 150 V995 M918.3 150 V995 M948.2 150 V995 M978.1 150 V995 M1037.8 150 V995 M1067.7 150 V995 M1097.6 150 V995 M1127.5 150 V995 M1187.3 150 V995 M1217.2 150 V995 M1247.1 150 V995 M1277.0 150 V995 M1336.7 150 V995 M1366.6 150 V995 M1396.5 150 V995 M1426.4 150 V995 M1486.2 150 V995 M1516.1 150 V995 M1546.0 150 V995 M1575.9 150 V995 M1635.6 150 V995 M1665.5 150 V995 M1695.4 150 V995 M1725.3 150 V995 M1785.1 150 V995 M1815.0 150 V995 M1844.9 150 V995 M1874.8 150 V995 M401 160.2 H1920 M401 190.1 H1920 M401 220.0 H1920 M401 249.9 H1920 M401 309.7 H1920 M401 339.6 H1920 M401 369.5 H1920 M401 399.4 H1920 M401 459.1 H1920 M401 489.0 H1920 M401 518.9 H1920 M401 548.8 H1920 M401 608.6 H1920 M401 638.5 H1920 M401 668.4 H1920 M401 698.3 H1920 M401 758.0 H1920 M401 787.9 H1920 M401 817.8 H1920 M401 847.7 H1920 M401 907.5 H1920 M401 937.4 H1920 M401 967.3 H1920" stroke="#e8e8e8" stroke-width="0.8"/>
<path d="M410.2 150 V995 M559.6 150 V995 M709.0 150 V995 M858.5 150 V995 M1008.0 150 V995 M1157.4 150 V995 M1306.8 150 V995 M1456.3 150 V995 M1605.8 150 V995 M1755.2 150 V995 M1904.7 150 V995 M401 279.8 H1920 M401 429.2 H1920 M401 578.7 H1920 M401 728.2 H1920 M401 877.6 H1920" stroke="#d4d4d4" stroke-width="0.9"/>
<text transform="translate(1293.3 141) rotate(90)" font-size="14.5" fill="#9a9a9a" font-family="Liberation Sans,sans-serif">125</text>
<text transform="translate(1442.8 141) rotate(90)" font-size="14.5" fill="#9a9a9a" font-family="Liberation Sans,sans-serif">100</text>
<text transform="translate(1592.2 141) rotate(90)" font-size="14.5" fill="#9a9a9a" font-family="Liberation Sans,sans-serif">175</text>
<text transform="translate(1741.7 141) rotate(90)" font-size="14.5" fill="#9a9a9a" font-family="Liberation Sans,sans-serif">150</text>
<text transform="translate(1891.2 141) rotate(90)" font-size="14.5" fill="#9a9a9a" font-family="Liberation Sans,sans-serif">125</text>
<path d="M980.7 296.8 H1100.6 V307.4 H1219.8 V296.8 H1339.7 V858.5 H1219.8 V847.6 H1100.6 V858.5 H980.7 Z" fill="#ddeefb" fill-opacity="0.45" stroke="#60b8e8" stroke-width="1.8"/>
<path d="M980.7 261.3 H1339.7" stroke="#1a1a1a" stroke-width="1.2"/><path d="M980.7 261.3 l11 -2.3 v4.6 Z M1339.7 261.3 l-11 -2.3 v4.6 Z" fill="#1a1a1a"/><path d="M980.7 255.5 V290.5" stroke="#1a1a1a" stroke-width="1.3"/><path d="M1339.7 255.5 V290.5" stroke="#1a1a1a" stroke-width="1.3"/><text class="dim" transform="translate(1160 256.3) scale(.866 1)" text-anchor="middle">300.00</text>
<path d="M1100.6 241.9 H1160.5" stroke="#1a1a1a" stroke-width="1.2"/><path d="M1100.6 241.9 l11 -2.3 v4.6 Z M1160.5 241.9 l-11 -2.3 v4.6 Z" fill="#1a1a1a"/><path d="M1100.6 236 V307" stroke="#1a1a1a" stroke-width="1.3"/><path d="M1160.5 236 V300.8" stroke="#1a1a1a" stroke-width="1.3"/><path d="M1160.5 313.8 V378.3" stroke="#1a1a1a" stroke-width="1.3"/><text class="dim" transform="translate(1130.4 236.8) scale(.866 1)" text-anchor="middle">50.00</text>
<path d="M1160.5 372.7 H1219.8" stroke="#1a1a1a" stroke-width="1.2"/><path d="M1160.5 372.7 l11 -2.3 v4.6 Z M1219.8 372.7 l-11 -2.3 v4.6 Z" fill="#1a1a1a"/><text class="dim" transform="translate(1189.8 367.4) scale(.866 1)" text-anchor="middle">50.00</text>
<path d="M1219.8 417.3 H1339.7" stroke="#1a1a1a" stroke-width="1.2"/><path d="M1219.8 417.3 l11 -2.3 v4.6 Z M1339.7 417.3 l-11 -2.3 v4.6 Z" fill="#1a1a1a"/><path d="M1219.8 307.5 V423" stroke="#1a1a1a" stroke-width="1.3"/><text class="dim" transform="translate(1272.5 412.2) scale(.866 1)" text-anchor="middle">100.00</text>
<path d="M980.7 440.8 H1100.6" stroke="#1a1a1a" stroke-width="1.2"/><path d="M980.7 440.8 l11 -2.3 v4.6 Z M1100.6 440.8 l-11 -2.3 v4.6 Z" fill="#1a1a1a"/><path d="M1100.6 307 V446.5" stroke="#1a1a1a" stroke-width="1.3"/><text class="dim" transform="translate(1038.5 436.1) scale(.866 1)" text-anchor="middle">100.00</text>
<path d="M980.7 804.4 H1339.7" stroke="#1a1a1a" stroke-width="1.2"/><path d="M980.7 804.4 l11 -2.3 v4.6 Z M1339.7 804.4 l-11 -2.3 v4.6 Z" fill="#1a1a1a"/><text class="dim" transform="translate(1160 799.3) scale(.866 1)" text-anchor="middle">300.00</text>
<path d="M810 296.6 H975" stroke="#1a1a1a" stroke-width="1.3"/><path d="M810 858.4 H974.5" stroke="#1a1a1a" stroke-width="1.3"/><path d="M816 297 V858" stroke="#1a1a1a" stroke-width="1.3"/>
<path d="M816 297 l-2.3 11 h4.6 Z M816 858 l-2.3 -11 h4.6 Z" fill="#1a1a1a"/>
<text class="dim" transform="translate(821.8 577.5) rotate(90) scale(.866 1)" text-anchor="middle">470.00</text>
<path d="M1120.7 848 V890.5" stroke="#1a1a1a" stroke-width="1.3"/><path d="M1120.7 847.6 l-2.3 11 h4.6 Z M1120.7 858.6 l-2.3 -11 h4.6 Z" fill="#1a1a1a"/><path d="M1106 847.4 H1127" stroke="#3a5566" stroke-width="1" opacity=".7"/><path d="M1113 858.6 H1127" stroke="#1a1a1a" stroke-width="1.3"/>
<text class="dim" transform="translate(1115.3 872) rotate(-90) scale(.866 1)" text-anchor="middle">9.00</text>
<circle cx="980.7" cy="858.6" r="3.9" fill="#fff" stroke="#3a3a3a" stroke-width="1.1"/><circle cx="1339.7" cy="858.6" r="3.9" fill="#fff" stroke="#3a3a3a" stroke-width="1.1"/>
</svg><svg style="left:401px;top:150px" width="1519" height="845" viewBox="401 150 1519 845" fill="none" stroke-linecap="round">
<path d="M983.8 307.1 L992.1 299.8 M988 303.5 L999.8 315.5 M1038.5 298.8 L1027.5 311.2 M1022.8 306.8 L1031.2 314.8 M1069 311.2 L1077.8 302.4 M1073.5 306.8 L1080.8 314 M1072.7 321.7 L1088.8 305.3 M1089.1 299.8 L1097.2 307.9 M1093.2 303.9 L1082.2 315.5 M1188.1 309.7 L1176.8 321.4 M1171.7 318.1 L1180.4 325.7 M1218 303.9 L1207.8 316.3 M1201.9 311.9 L1210.3 320.3 M1268.3 311.5 L1277.1 302.4 M1272.7 307.1 L1279.6 314.1 M1272 321.7 L1290.6 303.9 M1336.9 579.8 L1326.7 590.7 M1321.9 587.8 L1329.6 595.2" stroke="#9b9b9b" stroke-width="2.7"/>
<path d="M983.8 307.1 L992.1 299.8 M988 303.5 L999.8 315.5 M1038.5 298.8 L1027.5 311.2 M1022.8 306.8 L1031.2 314.8 M1069 311.2 L1077.8 302.4 M1073.5 306.8 L1080.8 314 M1072.7 321.7 L1088.8 305.3 M1089.1 299.8 L1097.2 307.9 M1093.2 303.9 L1082.2 315.5 M1188.1 309.7 L1176.8 321.4 M1171.7 318.1 L1180.4 325.7 M1218 303.9 L1207.8 316.3 M1201.9 311.9 L1210.3 320.3 M1268.3 311.5 L1277.1 302.4 M1272.7 307.1 L1279.6 314.1 M1272 321.7 L1290.6 303.9 M1336.9 579.8 L1326.7 590.7 M1321.9 587.8 L1329.6 595.2" stroke="#d9dcde" stroke-width="0.9"/>
<rect x="986.8" y="660.7" width="8.8" height="21.4" rx="1.5" fill="#dfe4e8" stroke="#8a8f94" stroke-width="1.1"/><path d="M992.3 661 V682" stroke="#8a8f94" stroke-width="1"/><path d="M987.5 665.5 L991.5 662.5 M987.5 669.5 L991.5 666.5 M987.5 673.5 L991.5 670.5 M987.5 677.5 L991.5 674.5 M987.5 681 L991.5 678.5" stroke="#8a8f94" stroke-width="1"/>
</svg><div class="abs" style="left:405px;top:155px;width:300px;height:25px;background:#f2f2f2;border:1px solid #c6c6c6"></div>
<svg style="left:409.6px;top:164px" width="11" height="8" viewBox="0 0 11 8"><path d="M5 0.5 V7.5 L0.3 4 Z M10.5 0.5 V7.5 L5.8 4 Z" fill="#222"/></svg>
<div class="t" style="left:430px;top:162.4px;font-size:11.1px;color:#555;transform:scaleX(0.937);transform-origin:0 0">NAVEGADOR</div>
<svg style="left:683px;top:162px" width="10" height="10" viewBox="0 0 10 10"><circle cx="5" cy="5" r="4.6" fill="#222"/><path d="M2.3 5 H7.7" stroke="#f2f2f2" stroke-width="1.3"/></svg>
<svg style="left:699px;top:161px" width="5" height="12" viewBox="0 0 5 12"><path d="M1 0 V12" stroke="#555" stroke-width="1.2"/><path d="M3.5 2 V10" stroke="#888" stroke-width="1"/></svg>
<svg style="left:421px;top:189px" width="13" height="12" viewBox="0 0 13 12"><path d="M12 0.8 V11 H1 Z" fill="#777" stroke="#222" stroke-width="1"/></svg>
<div class="abs" style="left:441px;top:185px;width:213px;height:20px;background:#f2f2f2"></div>
<svg style="left:444px;top:190px" width="17" height="10" viewBox="0 0 17 10"><path d="M0.5 5 C3 1 6 0 8.5 0 C11 0 14 1 16.5 5 C14 9 11 10 8.5 10 C6 10 3 9 0.5 5 Z" fill="#8c8c8c"/><circle cx="8.5" cy="5" r="3.3" fill="#f2f2f2"/><circle cx="8.5" cy="5" r="1.9" fill="#8c8c8c"/></svg>
<div class="abs" style="left:466px;top:187.5px;width:142px;height:16px;background:#9a9a9a"></div>
<svg style="left:469px;top:187px" width="17" height="17" viewBox="0 0 17 17"><path d="M1 4.5 L4.5 1 H15.5 V12 L12 15.5 H1 Z" fill="#fff" stroke="#444" stroke-width="0.9" stroke-linejoin="round"/><path d="M1 4.5 H12 V15.5 M12 4.5 L15.5 1" stroke="#666" stroke-width="0.8" fill="none"/><rect x="1.5" y="5" width="10" height="10" fill="#e9ecef"/><path d="M12.4 4.8 L15.1 2 V11.8 L12.4 14.6 Z" fill="#c8ccd0"/></svg>
<div class="t" style="left:499.5px;top:190px;font-size:11.4px;font-weight:bold;color:#fff">superior 2 final v2</div>
<svg style="left:611px;top:188px" width="15" height="15" viewBox="0 0 15 15"><circle cx="7" cy="7" r="7" fill="#1b9ad6"/><text x="3.4" y="10.8" font-size="10.5" font-weight="bold" fill="#fff" font-family="Liberation Sans,sans-serif">R</text><rect x="10.3" y="10" width="3.8" height="3.8" rx="1" fill="#fff" stroke="#333" stroke-width="0.8"/></svg>
<svg style="left:632px;top:188px" width="14" height="14" viewBox="0 0 14 14"><circle cx="7" cy="7" r="6.1" fill="#fff" stroke="#222" stroke-width="1.1"/><circle cx="7" cy="7" r="2.6" fill="#222"/></svg>
<svg style="left:441px;top:212px" width="10" height="14" viewBox="0 0 10 14"><path d="M1 1 L9 7 L1 13 Z" fill="#fff" stroke="#333" stroke-width="1.2" stroke-linejoin="round"/></svg>
<div class="abs" style="left:459px;top:209px;width:182px;height:20px;background:#f2f2f2"></div>
<svg style="left:462px;top:211px" width="16" height="16" viewBox="-8 -8 16 16" fill="#8f8f8f"><rect x="-1.7" y="-8" width="3.4" height="4" transform="rotate(0)"/><rect x="-1.7" y="-8" width="3.4" height="4" transform="rotate(45)"/><rect x="-1.7" y="-8" width="3.4" height="4" transform="rotate(90)"/><rect x="-1.7" y="-8" width="3.4" height="4" transform="rotate(135)"/><rect x="-1.7" y="-8" width="3.4" height="4" transform="rotate(180)"/><rect x="-1.7" y="-8" width="3.4" height="4" transform="rotate(225)"/><rect x="-1.7" y="-8" width="3.4" height="4" transform="rotate(270)"/><rect x="-1.7" y="-8" width="3.4" height="4" transform="rotate(315)"/><path fill-rule="evenodd" d="M0 -5.8 A5.8 5.8 0 1 0 0 5.8 A5.8 5.8 0 1 0 0 -5.8 Z M0 -2.6 A2.6 2.6 0 1 1 0 2.6 A2.6 2.6 0 1 1 0 -2.6 Z"/></svg>
<div class="t" style="left:492px;top:214.4px;font-size:11.1px;color:#222;transform:scaleX(0.966);transform-origin:0 0">Configuración del documento</div>
<svg style="left:441px;top:236px" width="10" height="14" viewBox="0 0 10 14"><path d="M1 1 L9 7 L1 13 Z" fill="#fff" stroke="#333" stroke-width="1.2" stroke-linejoin="round"/></svg>
<div class="abs" style="left:459px;top:233px;width:130px;height:20px;background:#f2f2f2"></div>
<svg style="left:462px;top:236px" width="17" height="14" viewBox="0 0 17 14"><path d="M0.5 1 H6.5 L7.5 3 H16.5 V13.5 H0.5 Z" fill="#8f8f8f"/><path d="M0.5 4.3 H16.5" stroke="#f2f2f2" stroke-width="0.8"/></svg>
<div class="t" style="left:492px;top:238.4px;font-size:11.1px;color:#222;transform:scaleX(1.001);transform-origin:0 0">Vistas guardadas</div>
<svg style="left:441px;top:260px" width="10" height="14" viewBox="0 0 10 14"><path d="M1 1 L9 7 L1 13 Z" fill="#fff" stroke="#333" stroke-width="1.2" stroke-linejoin="round"/></svg>
<div class="abs" style="left:459px;top:257px;width:99px;height:20px;background:#f2f2f2"></div>
<svg style="left:462px;top:261px" width="17" height="12" viewBox="0 0 17 12" fill="none" stroke="#a8a8a8" stroke-width="0.9"><path d="M0.8 6 C3.5 2 6 1.2 8.5 1.2 C11 1.2 13.5 2 16.2 6 C13.5 10 11 10.8 8.5 10.8 C6 10.8 3.5 10 0.8 6 Z"/><circle cx="8.5" cy="6" r="2.8"/><path d="M3 0.8 L14 11.2"/></svg>
<svg style="left:487px;top:260px" width="17" height="14" viewBox="0 0 17 14"><path d="M0.5 1 H6.5 L7.5 3 H16.5 V13.5 H0.5 Z" fill="#8f8f8f"/><path d="M0.5 4.3 H16.5" stroke="#f2f2f2" stroke-width="0.8"/></svg>
<div class="t" style="left:517px;top:262.4px;font-size:11.1px;color:#222;transform:scaleX(0.936);transform-origin:0 0">Origen</div>
<svg style="left:441px;top:284px" width="10" height="14" viewBox="0 0 10 14"><path d="M1 1 L9 7 L1 13 Z" fill="#fff" stroke="#333" stroke-width="1.2" stroke-linejoin="round"/></svg>
<div class="abs" style="left:459px;top:281px;width:107px;height:20px;background:#f2f2f2"></div>
<svg style="left:462px;top:286px" width="17" height="10" viewBox="0 0 17 10"><path d="M0.5 5 C3 1 6 0 8.5 0 C11 0 14 1 16.5 5 C14 9 11 10 8.5 10 C6 10 3 9 0.5 5 Z" fill="#8c8c8c"/><circle cx="8.5" cy="5" r="3.3" fill="#f2f2f2"/><circle cx="8.5" cy="5" r="1.9" fill="#8c8c8c"/></svg>
<svg style="left:487px;top:284px" width="17" height="14" viewBox="0 0 17 14"><path d="M0.5 1 H6.5 L7.5 3 H16.5 V13.5 H0.5 Z" fill="#8f8f8f"/><path d="M0.5 4.3 H16.5" stroke="#f2f2f2" stroke-width="0.8"/></svg>
<div class="t" style="left:517px;top:286.4px;font-size:11.1px;color:#222;transform:scaleX(0.985);transform-origin:0 0">Bocetos</div>
<div class="abs" style="left:405px;top:965px;width:300px;height:25px;background:#f2f2f2;border:1px solid #d6d6d6;border-bottom-color:#c4c4c4;border-right-color:#c4c4c4"></div>
<div class="t" style="left:430px;top:972.4px;font-size:11.1px;color:#555;transform:scaleX(.905);transform-origin:0 0">COMENTARIOS</div>
<svg style="left:683px;top:972px" width="10" height="10" viewBox="0 0 10 10"><circle cx="5" cy="5" r="4.6" fill="#222"/><path d="M2.3 5 H7.7 M5 2.3 V7.7" stroke="#f2f2f2" stroke-width="1.3"/></svg>
<svg style="left:699px;top:971px" width="5" height="12" viewBox="0 0 5 12"><path d="M1 0 V12" stroke="#555" stroke-width="1.2"/><path d="M3.5 2 V10" stroke="#888" stroke-width="1"/></svg><div class="abs" style="left:1830.8px;top:188px;width:53px;height:53px;background:#ededed;border:1px solid #a0a0a0;box-shadow:0 1px 7px rgba(0,0,0,.22)"></div>
<div class="abs" style="left:1840.3px;top:198px;width:33px;height:33px;background:#e5e7ea"></div>
<div class="t" style="left:1807.3px;top:209.5px;width:100px;text-align:center;font-size:11.2px;font-weight:bold;color:#a2a7ad;transform:scaleX(.78)">SUPERIOR</div>
<div class="t" style="left:1832.3px;top:174px;font-size:12px;font-weight:bold;color:#7be87b;transform:scaleX(.8);transform-origin:0 0">Y</div>
<svg style="left:1835px;top:184px" width="2" height="5"><path d="M1 0 V5" stroke="#6be36b" stroke-width="1.2"/></svg>
<div class="t" style="left:1888.5px;top:230.5px;font-size:12px;font-weight:bold;color:#f47078;transform:scaleX(.8);transform-origin:0 0">X</div>
<svg style="left:1884px;top:236px" width="4" height="2"><path d="M0 1 H4" stroke="#f0606c" stroke-width="1.2"/></svg>
<div class="t" style="left:1825px;top:238px;font-size:12.5px;font-weight:bold;color:#6a6af5;transform:scaleX(.85);transform-origin:0 0">Z</div>
<div class="abs" style="left:1667px;top:275px;width:250px;height:453px;background:#f2f2f2;border:1px solid #d0d0d0"></div><div class="abs" style="left:1668px;top:691px;width:248px;height:1px;background:#dadada"></div>
<div class="abs" style="left:1667px;top:275px;width:250px;height:25px;border:1px solid #c6c6c6;background:#f2f2f2"></div>
<svg style="left:1668.5px;top:282px" width="5" height="11" viewBox="0 0 5 11"><path d="M1 1 V10" stroke="#888" stroke-width="0.9"/><path d="M3.3 0 V11" stroke="#555" stroke-width="1.1"/></svg>
<svg style="left:1678.5px;top:282.5px" width="10" height="10" viewBox="0 0 10 10"><circle cx="5" cy="5" r="4.6" fill="#222"/><path d="M2.3 5 H7.7" stroke="#f2f2f2" stroke-width="1.3"/></svg>
<div class="t" style="left:1692px;top:282.2px;font-size:11.1px;color:#555;transform:scaleX(.897);transform-origin:0 0">PALETA DE BOCETO</div>
<svg style="left:1901px;top:284px" width="11" height="8" viewBox="0 0 11 8"><path d="M0.5 0.5 V7.5 L5.2 4 Z M6 0.5 V7.5 L10.7 4 Z" fill="#222"/></svg>
<svg style="left:1677px;top:311px" width="9" height="7" viewBox="0 0 9 7"><path d="M0 0.3 H9 L4.5 6.7 Z" fill="#222"/></svg>
<div class="t" style="left:1692px;top:309.5px;font-size:11.5px;font-weight:bold;color:#222">Opciones</div>
<div class="t" style="left:1680px;top:339.8px;font-size:11.1px;color:#222;transform:scaleX(0.928);transform-origin:0 0">Tipo de línea</div>
<div class="t" style="left:1680px;top:399.8px;font-size:11.1px;color:#222;transform:scaleX(0.941);transform-origin:0 0">Mirar a</div>
<div class="t" style="left:1680px;top:429.8px;font-size:11.1px;color:#222;transform:scaleX(0.944);transform-origin:0 0">Rejilla del boceto</div>
<svg style="left:1872px;top:427.4px" width="14" height="14" viewBox="0 0 14 14"><defs><linearGradient id="cg1872427.4" x1="0" y1="0" x2="0" y2="1"><stop offset="0" stop-color="#eeeeee"/><stop offset="0.45" stop-color="#e2e2e2"/><stop offset="1" stop-color="#b4b4b4"/></linearGradient></defs><rect x="1" y="1" width="12" height="12" rx="2.5" fill="url(#cg1872427.4)" stroke="#4a4a4a" stroke-width="1.1"/><path d="M3 7.2 L5.8 10.3 L10.8 2.8" stroke="#1a1a1a" stroke-width="1.5" fill="none"/></svg>
<div class="t" style="left:1680px;top:459.8px;font-size:11.1px;color:#222;transform:scaleX(0.998);transform-origin:0 0">Forzar</div>
<svg style="left:1872px;top:457.4px" width="14" height="14" viewBox="0 0 14 14"><defs><linearGradient id="cg1872457.4" x1="0" y1="0" x2="0" y2="1"><stop offset="0" stop-color="#eeeeee"/><stop offset="0.45" stop-color="#e2e2e2"/><stop offset="1" stop-color="#b4b4b4"/></linearGradient></defs><rect x="1" y="1" width="12" height="12" rx="2.5" fill="url(#cg1872457.4)" stroke="#4a4a4a" stroke-width="1.1"/></svg>
<div class="t" style="left:1680px;top:489.8px;font-size:11.1px;color:#222;transform:scaleX(0.962);transform-origin:0 0">Corte</div>
<svg style="left:1872px;top:487.4px" width="14" height="14" viewBox="0 0 14 14"><defs><linearGradient id="cg1872487.4" x1="0" y1="0" x2="0" y2="1"><stop offset="0" stop-color="#eeeeee"/><stop offset="0.45" stop-color="#e2e2e2"/><stop offset="1" stop-color="#b4b4b4"/></linearGradient></defs><rect x="1" y="1" width="12" height="12" rx="2.5" fill="url(#cg1872487.4)" stroke="#4a4a4a" stroke-width="1.1"/></svg>
<div class="t" style="left:1680px;top:519.8px;font-size:11.1px;color:#222;transform:scaleX(0.99);transform-origin:0 0">Mostrar el perfil</div>
<svg style="left:1872px;top:517.4px" width="14" height="14" viewBox="0 0 14 14"><defs><linearGradient id="cg1872517.4" x1="0" y1="0" x2="0" y2="1"><stop offset="0" stop-color="#eeeeee"/><stop offset="0.45" stop-color="#e2e2e2"/><stop offset="1" stop-color="#b4b4b4"/></linearGradient></defs><rect x="1" y="1" width="12" height="12" rx="2.5" fill="url(#cg1872517.4)" stroke="#4a4a4a" stroke-width="1.1"/><path d="M3 7.2 L5.8 10.3 L10.8 2.8" stroke="#1a1a1a" stroke-width="1.5" fill="none"/></svg>
<div class="t" style="left:1680px;top:549.8px;font-size:11.1px;color:#222;transform:scaleX(0.986);transform-origin:0 0">Mostrar puntos</div>
<svg style="left:1872px;top:547.4px" width="14" height="14" viewBox="0 0 14 14"><defs><linearGradient id="cg1872547.4" x1="0" y1="0" x2="0" y2="1"><stop offset="0" stop-color="#eeeeee"/><stop offset="0.45" stop-color="#e2e2e2"/><stop offset="1" stop-color="#b4b4b4"/></linearGradient></defs><rect x="1" y="1" width="12" height="12" rx="2.5" fill="url(#cg1872547.4)" stroke="#4a4a4a" stroke-width="1.1"/><path d="M3 7.2 L5.8 10.3 L10.8 2.8" stroke="#1a1a1a" stroke-width="1.5" fill="none"/></svg>
<div class="t" style="left:1680px;top:579.8px;font-size:11.1px;color:#222;transform:scaleX(0.994);transform-origin:0 0">Mostrar cotas</div>
<svg style="left:1872px;top:577.4px" width="14" height="14" viewBox="0 0 14 14"><defs><linearGradient id="cg1872577.4" x1="0" y1="0" x2="0" y2="1"><stop offset="0" stop-color="#eeeeee"/><stop offset="0.45" stop-color="#e2e2e2"/><stop offset="1" stop-color="#b4b4b4"/></linearGradient></defs><rect x="1" y="1" width="12" height="12" rx="2.5" fill="url(#cg1872577.4)" stroke="#4a4a4a" stroke-width="1.1"/><path d="M3 7.2 L5.8 10.3 L10.8 2.8" stroke="#1a1a1a" stroke-width="1.5" fill="none"/></svg>
<div class="t" style="left:1680px;top:609.8px;font-size:11.1px;color:#222;transform:scaleX(0.997);transform-origin:0 0">Mostrar restricciones</div>
<svg style="left:1872px;top:607.4px" width="14" height="14" viewBox="0 0 14 14"><defs><linearGradient id="cg1872607.4" x1="0" y1="0" x2="0" y2="1"><stop offset="0" stop-color="#eeeeee"/><stop offset="0.45" stop-color="#e2e2e2"/><stop offset="1" stop-color="#b4b4b4"/></linearGradient></defs><rect x="1" y="1" width="12" height="12" rx="2.5" fill="url(#cg1872607.4)" stroke="#4a4a4a" stroke-width="1.1"/><path d="M3 7.2 L5.8 10.3 L10.8 2.8" stroke="#1a1a1a" stroke-width="1.5" fill="none"/></svg>
<div class="t" style="left:1680px;top:639.8px;font-size:11.1px;color:#222;transform:scaleX(0.982);transform-origin:0 0">Mostrar las geometrías proyectadas</div>
<svg style="left:1872px;top:637.4px" width="14" height="14" viewBox="0 0 14 14"><defs><linearGradient id="cg1872637.4" x1="0" y1="0" x2="0" y2="1"><stop offset="0" stop-color="#eeeeee"/><stop offset="0.45" stop-color="#e2e2e2"/><stop offset="1" stop-color="#b4b4b4"/></linearGradient></defs><rect x="1" y="1" width="12" height="12" rx="2.5" fill="url(#cg1872637.4)" stroke="#4a4a4a" stroke-width="1.1"/><path d="M3 7.2 L5.8 10.3 L10.8 2.8" stroke="#1a1a1a" stroke-width="1.5" fill="none"/></svg>
<div class="abs" style="left:1872px;top:668px;width:14px;height:6px;overflow:hidden"><svg style="left:0px;top:0px" width="14" height="14" viewBox="0 0 14 14"><defs><linearGradient id="cg00" x1="0" y1="0" x2="0" y2="1"><stop offset="0" stop-color="#eeeeee"/><stop offset="0.45" stop-color="#e2e2e2"/><stop offset="1" stop-color="#b4b4b4"/></linearGradient></defs><rect x="1" y="1" width="12" height="12" rx="2.5" fill="url(#cg00)" stroke="#4a4a4a" stroke-width="1.1"/></svg></div>
<svg style="left:1870px;top:336px" width="18" height="18" viewBox="0 0 18 18" fill="none"><path d="M2 9.3 H16" stroke="#e8731a" stroke-width="1.1" stroke-dasharray="3.5 1.5 1.2 1.5"/><path d="M14.5 7 V11.5" stroke="#e8731a" stroke-width="1"/><path d="M4.5 8 L13 3 M4.5 10.6 L13 15.5" stroke="#555" stroke-width="1"/><path d="M12.5 1.5 L14 3 L15.5 1.2 M12.5 14.2 L14 15.6 L15.5 17" stroke="#e8731a" stroke-width="0.9"/></svg>
<svg style="left:1870px;top:366px" width="18" height="18" viewBox="0 0 18 18" fill="none"><path d="M2.5 7 V4.5 A2 2 0 0 1 4.5 2.5 H8 V1.8 H12 V3.5 H15.5 V7 M2.5 11 V13.5 A2 2 0 0 0 4.5 15.5 H8 V16.2 H12 V14.5 H15.5 V11" stroke="#c4c7ca" stroke-width="1"/><path d="M1.5 9 H16.5" stroke="#f3c6a4" stroke-width="1" stroke-dasharray="3 1.5"/></svg>
<svg style="left:1870px;top:395px" width="18" height="19" viewBox="0 0 18 19" fill="none"><rect x="1.8" y="7.5" width="14.4" height="9.5" rx="1" fill="#fff" stroke="#3c4654" stroke-width="1.05"/><rect x="5" y="10.5" width="8" height="3.6" fill="#b8bfd0" stroke="#3c4654" stroke-width="1"/><path d="M3 7.3 L6.5 3 L7 4.5 L9 3.6 L9.5 5 L12.5 3.6 L13 2.6 L14.8 7.3 Z" fill="#8b919a" stroke="#3c4654" stroke-width="0.8"/></svg>
<div class="abs" style="left:1806px;top:699.5px;width:99px;height:20px;border:1px solid #c9c9c9;background:#ededed"></div>
<div class="t" style="left:1806px;top:704.3px;width:99px;text-align:center;font-size:12.2px;color:#6a6a6a">Terminar boceto</div>
<div class="abs" style="left:1548px;top:671.5px;width:352px;height:24px;border:1px solid #555;background:#fbfbfb"></div>
<div class="t" style="left:1553px;top:676.5px;font-size:17.6px;color:#111;font-family:'DejaVu Sans','Liberation Sans',sans-serif;transform:scaleX(.862);transform-origin:0 0">Seleccionar objetos de boceto para acotarlos</div><div class="abs" style="left:1042.5px;top:966.5px;width:236.5px;height:23px;background:#f2f2f2"></div>
<svg style="left:1042px;top:966px" width="238" height="24" viewBox="1042 966 238 24" fill="none">
<path d="M1053.3 970.5 V985.5" stroke="#2a2f38" stroke-width="2.6"/><path d="M1053.3 971 V985" stroke="#fff" stroke-width="0.9"/><path d="M1050.3 973.5 L1053.3 969.8 L1056.3 973.5" stroke="#2a2f38" stroke-width="1" fill="#fff"/><path d="M1058.5 976.3 C1062 977.5 1061 980.5 1053.5 981 C1049 981.2 1046 980 1046 978.6 C1046 977.5 1047.5 976.8 1049.5 976.4" stroke="#2a2f38" stroke-width="1.3"/><path d="M1046.8 981.3 L1050 978.8 V983.6 Z" fill="#2a2f38"/>
<path d="M1066.2 975.3 h5.6 l-2.8 4 Z" fill="#222"/>
<rect x="1078.7" y="975.3" width="15" height="9.7" rx="0.8" fill="#fff" stroke="#2a2f38" stroke-width="1.2"/><rect x="1082" y="978.3" width="8.4" height="3.6" fill="#b8bfd0" stroke="#2a2f38" stroke-width="0.9"/><path d="M1080 975 L1083.5 970.8 L1084 972.3 L1086 971.4 L1086.5 972.8 L1089.5 971.4 L1090 970.4 L1091.5 975 Z" fill="#8b919a" stroke="#2a2f38" stroke-width="0.7"/>
<path d="M1108 985.5 C1106.5 983 1105 981 1104.5 979.5 C1104.2 978.5 1105.3 978 1106 978.8 L1107.8 981 V973 C1107.8 971.8 1109.5 971.8 1109.5 973 V977.5 V971.5 C1109.5 970.3 1111.3 970.3 1111.3 971.5 V977.3 V971.2 C1111.3 970 1113.1 970 1113.1 971.2 V977.5 V972.5 C1113.1 971.4 1114.9 971.4 1114.9 972.5 V977.5 L1115.2 975.2 C1115.4 974 1117 974.3 1116.9 975.5 C1116.8 978 1116.8 982 1115 985.5 Z" fill="#fff" stroke="#2a2f38" stroke-width="1"/>
<circle cx="1135.8" cy="977" r="4.6" fill="#d8ecf0" stroke="#2a2f38" stroke-width="1.2"/><path d="M1139.2 980.5 L1142.5 984" stroke="#2a2f38" stroke-width="2.2" stroke-linecap="round"/><path d="M1141.8 973 H1146 M1143.9 971 V975 M1141.8 976.6 H1146" stroke="#2a2f38" stroke-width="0.9"/>
<rect x="1156.5" y="970.5" width="15" height="14.5" stroke="#2a2f38" stroke-width="0.9" stroke-dasharray="2 1.3"/><circle cx="1163.3" cy="976.8" r="5.6" fill="#d8ecf0" stroke="#2a2f38" stroke-width="1.2"/><path d="M1167.3 981 L1170.7 984.6" stroke="#2a2f38" stroke-width="2.3" stroke-linecap="round"/>
<path d="M1177.3 975.3 h5.6 l-2.8 4 Z" fill="#222"/>
<rect x="1189.6" y="970.6" width="15" height="11.6" rx="0.8" fill="#fff" stroke="#2a2f38" stroke-width="1.1"/><rect x="1192" y="972.8" width="10.2" height="7.2" fill="#92b6e0" stroke="#3c5f96" stroke-width="0.8"/><path d="M1195.5 982.5 H1198.8 L1199.5 984.5 H1194.8 Z" fill="#d0d0d0" stroke="#999" stroke-width="0.5"/><path d="M1193.5 985 H1200.8" stroke="#999" stroke-width="0.9"/>
<path d="M1207.5 975.3 h5.6 l-2.8 4 Z" fill="#222"/>
<rect x="1220.2" y="970.7" width="15.2" height="15.2" fill="#5b6070" stroke="#2a2f38" stroke-width="0.8"/><rect x="1221.0" y="971.5" width="2.1" height="2.1" fill="#fff" fill-opacity="0.95"/><rect x="1223.9" y="971.5" width="2.1" height="2.1" fill="#fff" fill-opacity="0.95"/><rect x="1226.8" y="971.5" width="2.1" height="2.1" fill="#fff" fill-opacity="0.95"/><rect x="1229.7" y="971.5" width="2.1" height="2.1" fill="#fff" fill-opacity="0.95"/><rect x="1232.6" y="971.5" width="2.1" height="2.1" fill="#fff" fill-opacity="0.95"/><rect x="1221.0" y="974.4" width="2.1" height="2.1" fill="#fff" fill-opacity="0.83"/><rect x="1223.9" y="974.4" width="2.1" height="2.1" fill="#fff" fill-opacity="0.83"/><rect x="1226.8" y="974.4" width="2.1" height="2.1" fill="#fff" fill-opacity="0.83"/><rect x="1229.7" y="974.4" width="2.1" height="2.1" fill="#fff" fill-opacity="0.83"/><rect x="1232.6" y="974.4" width="2.1" height="2.1" fill="#fff" fill-opacity="0.83"/><rect x="1221.0" y="977.3" width="2.1" height="2.1" fill="#fff" fill-opacity="0.71"/><rect x="1223.9" y="977.3" width="2.1" height="2.1" fill="#fff" fill-opacity="0.71"/><rect x="1226.8" y="977.3" width="2.1" height="2.1" fill="#fff" fill-opacity="0.71"/><rect x="1229.7" y="977.3" width="2.1" height="2.1" fill="#fff" fill-opacity="0.71"/><rect x="1232.6" y="977.3" width="2.1" height="2.1" fill="#fff" fill-opacity="0.71"/><rect x="1221.0" y="980.2" width="2.1" height="2.1" fill="#fff" fill-opacity="0.59"/><rect x="1223.9" y="980.2" width="2.1" height="2.1" fill="#fff" fill-opacity="0.59"/><rect x="1226.8" y="980.2" width="2.1" height="2.1" fill="#fff" fill-opacity="0.59"/><rect x="1229.7" y="980.2" width="2.1" height="2.1" fill="#fff" fill-opacity="0.59"/><rect x="1232.6" y="980.2" width="2.1" height="2.1" fill="#fff" fill-opacity="0.59"/><rect x="1221.0" y="983.1" width="2.1" height="2.1" fill="#fff" fill-opacity="0.47"/><rect x="1223.9" y="983.1" width="2.1" height="2.1" fill="#fff" fill-opacity="0.47"/><rect x="1226.8" y="983.1" width="2.1" height="2.1" fill="#fff" fill-opacity="0.47"/><rect x="1229.7" y="983.1" width="2.1" height="2.1" fill="#fff" fill-opacity="0.47"/><rect x="1232.6" y="983.1" width="2.1" height="2.1" fill="#fff" fill-opacity="0.47"/>
<path d="M1238.3 975.3 h5.6 l-2.8 4 Z" fill="#222"/>
<rect x="1251.3" y="971.3" width="14.4" height="12.6" rx="0.8" fill="#4a6aa8" stroke="#33508a" stroke-width="0.8"/><rect x="1252.5" y="972.5" width="5.5" height="4.6" fill="#b3caec"/><rect x="1259" y="972.5" width="5.5" height="4.6" fill="#b3caec"/><rect x="1252.5" y="978.1" width="5.5" height="4.6" fill="#b3caec"/><rect x="1259" y="978.1" width="5.5" height="4.6" fill="#b3caec"/>
<path d="M1269.2 975.3 h5.6 l-2.8 4 Z" fill="#222"/>
</svg>
<div id="timeline"></div>
<svg style="left:401px;top:995px" width="1519" height="45" viewBox="401 995 1519 45" fill="none">
<path d="M412.5 1012 V1026.5" stroke="#222" stroke-width="1.6"/><path d="M424 1012 V1026.5 L414.5 1019.3 Z" fill="#222"/>
<path d="M445 1013.5 V1025 L436.5 1019.3 Z" fill="#222"/><path d="M448.5 1016.3 V1022.3" stroke="#222" stroke-width="1.8"/>
<path d="M462 1011.5 V1027 L474 1019.3 Z" fill="#222"/>
<path d="M490.5 1013.5 V1025 L499 1019.3 Z" fill="#222"/><path d="M487 1016.3 V1022.3" stroke="#222" stroke-width="1.8"/>
<path d="M512 1012 V1026.5 L521.5 1019.3 Z" fill="#222"/><path d="M523.7 1012 V1026.5" stroke="#222" stroke-width="1.6"/>
<rect x="548.5" y="1011.5" width="12" height="12" stroke="#555" stroke-width="1"/><rect x="547.3" y="1010.3" width="2.4" height="2.4" fill="#1e8fe0"/><rect x="559.3" y="1010.3" width="2.4" height="2.4" fill="#1e8fe0"/><rect x="547.3" y="1022.3" width="2.4" height="2.4" fill="#1e8fe0"/>
<path d="M556 1024 L561.5 1018.5 L563.5 1020.5 L558 1026 L555.3 1026.6 Z" fill="#f5a623"/><path d="M560.5 1019.5 L561.8 1018.2 L563.8 1020.2 L562.5 1021.5 Z" fill="#e8505b"/>
<path d="M571.5 1014.5 L574 1012 H582.5 V1021.5 L580 1024 H571.5 Z" fill="#dfe8f0" stroke="#e3e3e3" stroke-width="0.8"/><rect x="572" y="1015" width="8" height="8.5" fill="#cfe0ee"/><path d="M584.7 1021 V1013 M583 1015 L584.7 1012.8 L586.4 1015" stroke="#ccc" stroke-width="1"/>
<path d="M555.5 1030 V1035 H580 V1030" stroke="#c8c8c8" stroke-width="1.2"/>
<path d="M585 1004.3 H597.3 V1007 L591.8 1013.3 H590.5 L585 1007 Z" fill="#555"/><path d="M591.1 1012 V1035.7" stroke="#444" stroke-width="1.5"/>
</svg>
<svg style="left:1892px;top:1011px" width="16" height="16" viewBox="-8 -8 16 16" fill="#8c8c8c"><rect x="-1.7" y="-8" width="3.4" height="4" transform="rotate(0)"/><rect x="-1.7" y="-8" width="3.4" height="4" transform="rotate(45)"/><rect x="-1.7" y="-8" width="3.4" height="4" transform="rotate(90)"/><rect x="-1.7" y="-8" width="3.4" height="4" transform="rotate(135)"/><rect x="-1.7" y="-8" width="3.4" height="4" transform="rotate(180)"/><rect x="-1.7" y="-8" width="3.4" height="4" transform="rotate(225)"/><rect x="-1.7" y="-8" width="3.4" height="4" transform="rotate(270)"/><rect x="-1.7" y="-8" width="3.4" height="4" transform="rotate(315)"/><path fill-rule="evenodd" d="M0 -5.8 A5.8 5.8 0 1 0 0 5.8 A5.8 5.8 0 1 0 0 -5.8 Z M0 -2.6 A2.6 2.6 0 1 1 0 2.6 A2.6 2.6 0 1 1 0 -2.6 Z"/></svg><div id="taskbar"></div>
<div class="abs" style="left:48px;top:1040px;width:344px;height:40px;background:#474747"></div>
<div class="abs" style="left:835px;top:1040px;width:47px;height:40px;background:#393939"></div>
<div class="abs" style="left:545.5px;top:1077.7px;width:39.299999999999955px;height:2.3px;background:#9c9c9c"></div>
<div class="abs" style="left:692px;top:1077.7px;width:39.700000000000045px;height:2.3px;background:#9c9c9c"></div>
<div class="abs" style="left:741px;top:1077.7px;width:39.60000000000002px;height:2.3px;background:#9c9c9c"></div>
<div class="abs" style="left:790px;top:1077.7px;width:40px;height:2.3px;background:#9c9c9c"></div>
<div class="abs" style="left:835px;top:1077.7px;width:47px;height:2.3px;background:#9c9c9c"></div>
<svg style="left:0;top:1040px" width="1920" height="40" viewBox="0 1040 1920 40" fill="none">
<path d="M16 1054.3 L22.6 1053.3 V1059.6 H16 Z M23.5 1053.2 L32 1052 V1059.6 H23.5 Z M16 1060.5 H22.6 V1066.8 L16 1065.8 Z M23.5 1060.5 H32 V1068 L23.5 1066.9 Z" fill="#fff"/>
<circle cx="70.8" cy="1057.3" r="4.6" stroke="#e6e6e6" stroke-width="1.3"/><path d="M67.5 1060.8 L60.5 1067.5" stroke="#e6e6e6" stroke-width="1.3"/>
<rect x="409.2" y="1056.2" width="9" height="7" stroke="#fff" stroke-width="1.3"/><path d="M408.3 1052.7 H418.8 M408.3 1066.4 H418.8 M422.5 1061 V1066.8" stroke="#fff" stroke-width="1.3"/><rect x="421.3" y="1055.6" width="2.4" height="3" fill="#fff"/><path d="M422.5 1052.2 V1055" stroke="#fff" stroke-width="1.3"/>
<defs><linearGradient id="eg" x1="0" y1="0" x2="1" y2="1"><stop offset="0" stop-color="#35c1f1"/><stop offset="1" stop-color="#0c59a4"/></linearGradient><linearGradient id="eg2" x1="0" y1="0" x2="1" y2="0"><stop offset="0" stop-color="#1b9de2"/><stop offset="1" stop-color="#5ed45a"/></linearGradient></defs>
<circle cx="467" cy="1060" r="12" fill="url(#eg)"/><path d="M455.3 1058 A12 12 0 0 1 479 1058.5 C479 1063 475 1064.5 471.5 1064 C468 1063.5 468.5 1060.5 470 1059 C466 1055 459 1056.5 455.3 1058 Z" fill="url(#eg2)"/><path d="M462 1063 C462 1067.5 466 1071 471 1071.3 C465 1074 457 1070.5 455.5 1063 C455 1058.5 459.5 1056 463 1057 C462.3 1058.8 462 1060.8 462 1063 Z" fill="#0a4f96"/>
<circle cx="516" cy="1060" r="10.5" fill="#1a0808" stroke="#e02020" stroke-width="1.6"/><circle cx="515.5" cy="1060.3" r="5.2" fill="#e02020"/><circle cx="515.5" cy="1060.3" r="2.5" fill="#1a0808"/><path d="M515.5 1053.5 V1055.5 M515.5 1065 V1067 M508.7 1060.3 H510.7 M510.7 1055.5 L512 1056.8 M510.7 1065.1 L512 1063.8 M520.3 1065.1 L519 1063.8" stroke="#e02020" stroke-width="2"/><path d="M519.5 1058 L522.8 1054.3 L524 1059.5 Z" fill="#e02020"/>
<path d="M554 1051 H562 L563.5 1053 H575.5 V1066 H554 Z" fill="#e8b13a"/><path d="M554 1054.2 H575.7 V1067.8 H554 Z" fill="#fbd76a"/><path d="M554 1063 H575.7 V1067.8 H554 Z" fill="#f6c84c"/><path d="M558.5 1069 V1061.5 H571.5 V1069 H568 V1065 H562 V1069 Z" fill="#3b8ed8"/>
<path d="M608 1054 V1051.5 A2.5 2.5 0 0 1 610.5 1049 H616.5 A2.5 2.5 0 0 1 619 1051.5 V1054" stroke="#2aa3ef" stroke-width="1.6"/><path d="M602.5 1053.5 H624.5 V1068 A3 3 0 0 1 621.5 1071 H605.5 A3 3 0 0 1 602.5 1068 Z" fill="#f4f4f4"/><rect x="609" y="1058" width="4" height="4" fill="#f25022"/><rect x="614" y="1058" width="4" height="4" fill="#7fba00"/><rect x="609" y="1063" width="4" height="4" fill="#00a4ef"/><rect x="614" y="1063" width="4" height="4" fill="#ffb900"/>
<path d="M651 1056.5 L663 1048.5 L675 1056.5 V1070.5 H651 Z" fill="#0f6cbd"/><path d="M651 1056.5 H675 L663 1065 Z" fill="#f5f5f5"/><path d="M651 1058 L663 1066 L675 1058 V1070.5 H651 Z" fill="#28a8ea"/><path d="M663 1066 L675 1058 V1070.5 Z" fill="#1790d8"/>
<ellipse cx="712" cy="1060" rx="11.2" ry="11.5" stroke="#e0204a" stroke-width="1.7"/><ellipse cx="713" cy="1060" rx="5" ry="9.6" stroke="#e0204a" stroke-width="1.5"/>
<rect x="755.2" y="1048.8" width="17.8" height="21.4" rx="1.3" fill="#41a5ee"/><rect x="755.2" y="1054.2" width="17.8" height="5.4" fill="#2b7cd3"/><rect x="755.2" y="1059.6" width="17.8" height="5.3" fill="#185abd"/><path d="M755.2 1064.9 H773 V1068.9 A1.3 1.3 0 0 1 771.7 1070.2 H756.5 A1.3 1.3 0 0 1 755.2 1068.9 Z" fill="#103f91"/><rect x="749.1" y="1053.7" width="12.6" height="12.4" rx="1" fill="#185abd"/>
<text transform="translate(750.2 1064) scale(.88 1.08)" font-size="9.6" font-weight="bold" fill="#fff" font-family="Liberation Sans,sans-serif">W</text>
<circle cx="810" cy="1060" r="12" fill="#5865f2"/><path d="M803.5 1056 C805.5 1054.7 807.5 1054.3 808 1054.3 L808.5 1055.2 H811.5 L812 1054.3 C812.5 1054.3 814.5 1054.7 816.5 1056 C818 1058.5 818.8 1061.5 818.5 1064.5 C817 1065.7 815.5 1066.2 814.5 1066.3 L813.7 1065 C811.5 1065.6 808.5 1065.6 806.3 1065 L805.5 1066.3 C804.5 1066.2 803 1065.7 801.5 1064.5 C801.2 1061.5 802 1058.5 803.5 1056 Z" fill="#fff"/><ellipse cx="807.3" cy="1061" rx="1.5" ry="1.7" fill="#5865f2"/><ellipse cx="812.7" cy="1061" rx="1.5" ry="1.7" fill="#5865f2"/>
<path d="M848 1051.5 L851 1047.8 H868.3 A1.4 1.4 0 0 1 869.7 1049.2 V1067 L866.8 1072 H849.4 A1.4 1.4 0 0 1 848 1070.6 Z" fill="#c8501a"/><rect x="851" y="1047.8" width="18.7" height="18.5" rx="1.4" fill="#ff7a1a"/><path d="M849.5 1065.3 H867.5 L869.5 1066 L866.8 1072 H849.4 A1.4 1.4 0 0 1 848 1070.6 V1066.5 Z" fill="#8a3a12"/>
<text x="855.2" y="1062.3" font-size="14" font-weight="bold" fill="#fff" font-family="Liberation Sans,sans-serif">F</text><text x="853.2" y="1070.8" font-size="5.6" font-weight="bold" fill="#f5c9a8" font-family="Liberation Sans,sans-serif">360</text>
<path d="M1647 1062.5 L1652.5 1057 L1658 1062.5" stroke="#fff" stroke-width="1.2"/>
<path d="M1671.5 1056.5 C1673 1055.5 1674.5 1055.2 1675 1055.2 L1675.4 1056 H1678.6 L1679 1055.2 C1679.5 1055.2 1681 1055.5 1682.5 1056.5 C1683.8 1058.5 1684.3 1061 1684 1063.5 C1682.8 1064.4 1681.5 1064.8 1680.8 1064.9 L1680.2 1063.8 C1678.3 1064.3 1675.7 1064.3 1673.8 1063.8 L1673.2 1064.9 C1672.5 1064.8 1671.2 1064.4 1670 1063.5 C1669.7 1061 1670.2 1058.5 1671.5 1056.5 Z" fill="#fff"/><ellipse cx="1674.8" cy="1060.6" rx="1.2" ry="1.4" fill="#1b1b1b"/><ellipse cx="1679.2" cy="1060.6" rx="1.2" ry="1.4" fill="#1b1b1b"/><circle cx="1682.5" cy="1055" r="2.6" fill="#f23f43"/>
<path d="M1696.5 1064.5 A3.3 3.3 0 0 1 1696.8 1058 A4.2 4.2 0 0 1 1704.8 1057.2 A3.8 3.8 0 0 1 1706 1064.5 Z" fill="#e8e8e8"/>
<rect x="1721" y="1054.5" width="10.5" height="7.5" stroke="#fff" stroke-width="1.1"/><path d="M1724 1066.5 H1729 M1726.3 1062 V1066.5" stroke="#fff" stroke-width="1.1"/><rect x="1717.5" y="1052.5" width="4" height="6.5" fill="#1b1b1b" stroke="#fff" stroke-width="1"/>
<path d="M1742 1058 H1744.5 L1748 1054.7 V1065.3 L1744.5 1062 H1742 Z" stroke="#fff" stroke-width="1.2"/><path d="M1750 1057.3 A3.5 3.5 0 0 1 1750 1062.7 M1752 1055.3 A6 6 0 0 1 1752 1064.7" stroke="#fff" stroke-width="1"/><path d="M1754 1053.3 A8.5 8.5 0 0 1 1754 1066.7" stroke="#777" stroke-width="0.9"/>
<path d="M1879.5 1052.5 H1894.5 V1063.5 H1889.8 L1887 1066.8 L1884.2 1063.5 H1879.5 Z" stroke="#fff" stroke-width="1.1"/>
<path d="M1915.5 1040 V1080" stroke="#555" stroke-width="1"/>
</svg>
<div class="t" style="left:88px;top:1053.3px;font-size:14.8px;color:#ececec;font-family:'DejaVu Sans','Liberation Sans',sans-serif;transform:scaleX(.88);transform-origin:0 0">Buscar</div>
<div class="t" style="left:1768.5px;top:1055px;font-size:11.2px;color:#fff;font-family:'DejaVu Sans','Liberation Sans',sans-serif;transform:scaleX(.87);transform-origin:0 0">ESP</div>
<div class="t" style="left:1782px;top:1045.8px;width:100px;text-align:center;font-size:11.5px;color:#fff;font-family:'DejaVu Sans','Liberation Sans',sans-serif;transform:scaleX(.88)">06:34 pm</div>
<div class="t" style="left:1782px;top:1064.2px;width:100px;text-align:center;font-size:11.5px;color:#fff;font-family:'DejaVu Sans','Liberation Sans',sans-serif;transform:scaleX(.88)">23/04/2023</div></div>
</body>
</html>
